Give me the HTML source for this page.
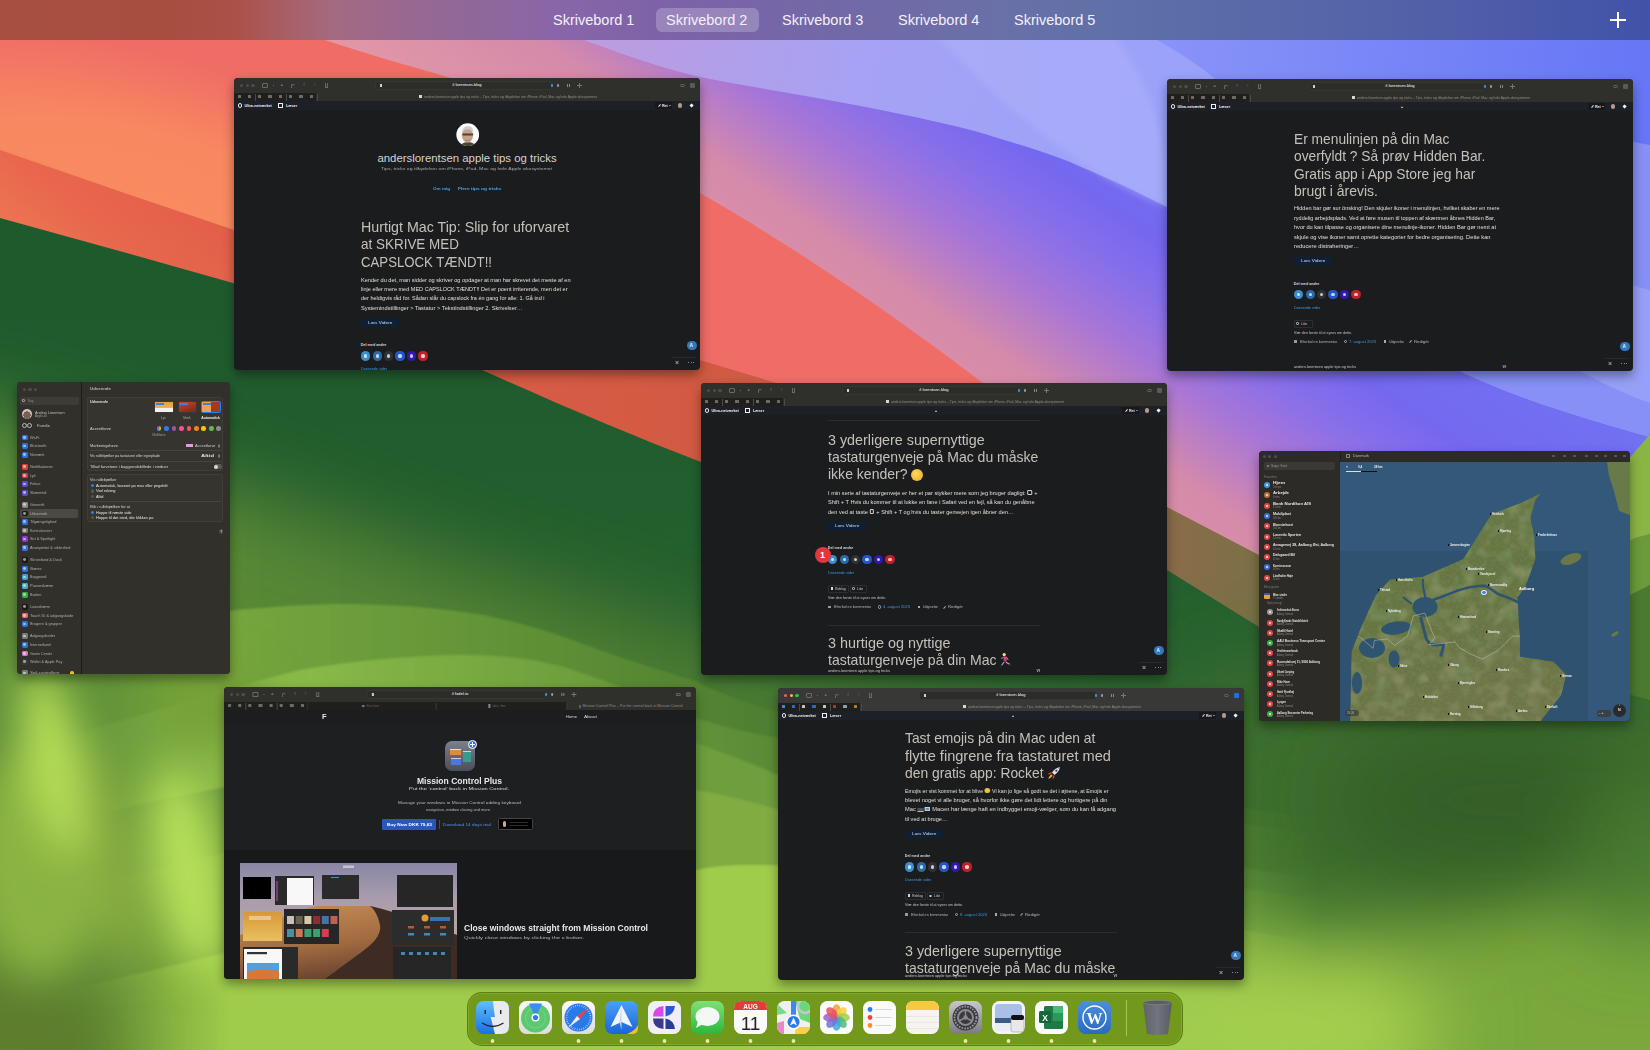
<!DOCTYPE html>
<html><head><meta charset="utf-8"><style>
*{box-sizing:border-box;margin:0;padding:0}
html,body{width:1650px;height:1050px;overflow:hidden;background:#000}
body{position:relative;font-family:"Liberation Sans",sans-serif}
.wp{position:absolute;left:0;top:0}
.topbar{position:absolute;left:0;top:0;width:1650px;height:40px;background:linear-gradient(90deg,#a85040 0px,#a84e40 167px,#ac5048 233px,#a86068 290px,#a46a80 333px,#9a6890 400px,#906898 467px,#8a66a8 550px,#7e62a8 650px,#7268a8 830px,#6a70a8 1000px,#6070a8 1100px,#5262a8 1400px,#4252a8 1650px)}
.pill{position:absolute;left:656px;top:8px;width:103px;height:24px;border-radius:6px;background:rgba(255,255,255,0.22)}
.tlabel{position:absolute;top:11px;font-size:14.5px;line-height:18px;color:#f4f0f8;white-space:nowrap}
.plus{position:absolute;left:1610px;top:12px;width:16px;height:16px}
.plus:before{content:"";position:absolute;left:7px;top:0;width:2px;height:16px;background:#fff}
.plus:after{content:"";position:absolute;left:0;top:7px;width:16px;height:2px;background:#fff}
.t{position:absolute;line-height:0;white-space:nowrap}
.r{position:absolute}
.win{position:absolute;background:#1b1c1e;border-radius:4px;overflow:hidden;box-shadow:0 5px 11px rgba(0,0,0,0.38)}
.dock{position:absolute;left:467px;top:992px;width:716px;height:54px;border-radius:15px;background:#72981c;border:1px solid rgba(70,100,20,0.5);box-shadow:inset 0 0 0 1px rgba(160,200,70,0.35)}
</style></head>
<body>

<svg class="wp" width="1650" height="1050" viewBox="0 0 1650 1050">
<defs>
  <linearGradient id="gCool" gradientUnits="userSpaceOnUse" x1="950" y1="470" x2="1230" y2="60">
    <stop offset="0" stop-color="#e298a6"/>
    <stop offset="0.25" stop-color="#d48aaa"/>
    <stop offset="0.4" stop-color="#a876d6"/>
    <stop offset="0.5" stop-color="#8c70e8"/>
    <stop offset="0.62" stop-color="#7468f0"/>
    <stop offset="1" stop-color="#7078f4"/>
  </linearGradient>
  <linearGradient id="fadeR" gradientUnits="userSpaceOnUse" x1="0" y1="0" x2="1650" y2="0">
    <stop offset="0.03" stop-color="#000"/><stop offset="0.14" stop-color="#fff"/><stop offset="0.70" stop-color="#fff"/><stop offset="0.80" stop-color="#000"/>
  </linearGradient>
  <linearGradient id="gH1" gradientUnits="userSpaceOnUse" x1="230" y1="0" x2="780" y2="0"><stop offset="0" stop-color="#76a63e"/><stop offset="1" stop-color="#4e7e30"/></linearGradient>
  <linearGradient id="gH2" gradientUnits="userSpaceOnUse" x1="300" y1="0" x2="780" y2="0"><stop offset="0" stop-color="#8aba48"/><stop offset="1" stop-color="#5a8a36"/></linearGradient>
  <linearGradient id="gMid" gradientUnits="userSpaceOnUse" x1="0" y1="0" x2="800" y2="0"><stop offset="0" stop-color="#5e8e38"/><stop offset="1" stop-color="#4a7a30"/></linearGradient>
  <linearGradient id="gBlueR" gradientUnits="userSpaceOnUse" x1="1150" y1="0" x2="1650" y2="60"><stop offset="0" stop-color="#8a94f8"/><stop offset="1" stop-color="#6676f6"/></linearGradient>
  <linearGradient id="gGlow" gradientUnits="userSpaceOnUse" x1="60" y1="300" x2="170" y2="160"><stop offset="0" stop-color="#f08456" stop-opacity="0.75"/><stop offset="0.45" stop-color="#f08456" stop-opacity="0.25"/><stop offset="1" stop-color="#f08456" stop-opacity="0"/></linearGradient>
  <mask id="mR" maskUnits="userSpaceOnUse" x="0" y="0" width="1650" height="1050"><rect width="1650" height="1050" fill="url(#fadeR)"/></mask>
  <linearGradient id="gLav" gradientUnits="userSpaceOnUse" x1="500" y1="40" x2="1200" y2="200">
    <stop offset="0" stop-color="#c49ad8"/>
    <stop offset="0.5" stop-color="#a6a2f4"/>
    <stop offset="1" stop-color="#98a2fa"/>
  </linearGradient>
  <radialGradient id="gCoral" gradientUnits="userSpaceOnUse" cx="0" cy="0" r="1" gradientTransform="translate(150 230) rotate(16.7) scale(420 175)">
    <stop offset="0" stop-color="#f98c60"/>
    <stop offset="0.55" stop-color="#f78860"/>
    <stop offset="1" stop-color="#f06c66"/>
  </radialGradient>
  <linearGradient id="gRed" gradientUnits="userSpaceOnUse" x1="0" y1="0" x2="1300" y2="0">
    <stop offset="0" stop-color="#e85e4c"/>
    <stop offset="0.55" stop-color="#d25a42"/>
    <stop offset="0.9" stop-color="#8a6c4a"/>
    <stop offset="0.97" stop-color="#7a7046"/>
    <stop offset="1" stop-color="#787046"/>
  </linearGradient>
  <linearGradient id="gGreen" gradientUnits="userSpaceOnUse" x1="0" y1="300" x2="0" y2="800">
    <stop offset="0" stop-color="#1f5a2d"/>
    <stop offset="1" stop-color="#2a6430"/>
  </linearGradient>
  <filter id="b4" filterUnits="userSpaceOnUse" x="-200" y="-200" width="2050" height="1450"><feGaussianBlur stdDeviation="3"/></filter>
  <filter id="b1" filterUnits="userSpaceOnUse" x="-200" y="-200" width="2050" height="1450"><feGaussianBlur stdDeviation="1.2"/></filter>
  <filter id="b20" filterUnits="userSpaceOnUse" x="-200" y="-200" width="2050" height="1450"><feGaussianBlur stdDeviation="20"/></filter>
  <filter id="b40" filterUnits="userSpaceOnUse" x="-200" y="-200" width="2050" height="1450"><feGaussianBlur stdDeviation="40"/></filter>
</defs>
<rect width="1650" height="1050" fill="url(#gCool)"/>
<!-- lavender top band (above L3) -->
<path d="M470 0 L1650 0 L1650 437 C1590 420 1520 400 1460 371 C1360 320 1260 250 1167 207 C1130 188 1100 175 1070 162 C1040 150 1010 142 985 134 C950 124 910 116 871 108 C810 96 750 87 700 77 C630 60 590 40 470 0 Z" fill="url(#gLav)"/>
<!-- light stripe -->
<path d="M900 0 L1080 0 C1150 60 1170 140 1167 207 C1060 170 960 60 900 0 Z" fill="#b0b2fa" opacity="0.5" filter="url(#b4)"/>
<!-- blue right of L5 -->
<path d="M1080 0 L1650 0 L1650 400 C1580 370 1450 270 1214 78 C1180 50 1140 30 1080 0 Z" fill="url(#gBlueR)"/>
<path d="M1300 79 L1650 145 L1650 437 C1590 420 1520 400 1460 371 C1420 330 1360 250 1300 79 Z" fill="#8690f6"/>
<path d="M1500 250 L1650 290 L1650 403 C1620 392 1600 382 1580 371 Z" fill="#96a0f8"/>
<!-- coral warm region -->
<path d="M193 0 C250 15 290 28 325 40 C370 55 410 66 451 78 C540 115 620 150 700 193 C800 250 900 320 983 383 C1050 430 1110 470 1167 507 L1300 600 L1300 1050 L0 1050 L0 0 Z" fill="url(#gCoral)"/>
<!-- red band -->
<path d="M0 150 C80 178 160 205 240 232 L700 360 L776 383 C900 420 1040 465 1167 507 L1259 555 L1400 620 L1400 1050 L0 1050 Z" fill="url(#gRed)"/>
<path d="M-20 140 C80 175 160 205 240 232 L560 330 L560 420 L-20 420 Z" fill="url(#gGlow)"/>
<!-- dark green -->
<path d="M0 218 C80 240 160 262 240 285 C320 310 400 340 482 370 C560 405 630 435 701 462 C850 510 1000 535 1167 570 L1259 627 C1350 640 1500 560 1633 467 L1650 434 L1650 1050 L0 1050 Z" fill="url(#gGreen)"/>
<!-- soft mid green lower-left -->
<g filter="url(#b40)">
  <path d="M-100 390 C0 415 100 445 230 490 C350 530 450 565 560 595 C700 640 900 700 1250 740 L1250 1150 L-100 1150 Z" fill="url(#gMid)"/>
  <path d="M1200 660 C1400 700 1550 690 1750 640 L1750 1150 L1200 1150 Z" fill="#3e6e2e"/>
  <path d="M1150 1150 C1250 1000 1400 900 1750 860 L1750 1150 Z" fill="#7aa83c"/>
</g>
<g filter="url(#b1)" mask="url(#mR)">
  <path d="M-20 660 C80 630 200 608 332 604 C420 604 480 612 521 624 C560 634 585 645 608 653 C640 664 670 673 695 681 C720 693 750 705 778 712 C900 745 1100 790 1400 830 L1400 1100 L-20 1100 Z" fill="url(#gH1)"/>
  <path d="M-20 760 C100 730 200 695 300 670 C360 660 410 656 457 655 C500 655 530 658 560 666 C580 672 600 679 617 686 C650 700 675 710 696 718 C720 726 750 733 778 738 C900 765 1100 800 1400 850 L1400 1100 L-20 1100 Z" fill="url(#gH2)"/>
  <path d="M-20 840 C150 800 350 760 550 730 C620 725 670 735 696 743 C730 755 755 765 778 775 C900 810 1100 850 1400 890 L1400 1100 L-20 1100 Z" fill="#6e9e3c"/>
  <path d="M-20 910 C120 880 300 830 550 785 C620 780 670 785 696 790 C730 796 755 803 778 809 C900 840 1100 870 1400 910 L1400 1100 L-20 1100 Z" fill="#80ac42"/>
  <path d="M-20 1010 C80 990 300 930 550 885 C620 875 670 872 696 870 C715 866 737 864 778 865.5 C900 870 1100 900 1400 960 L1400 1100 L-20 1100 Z" fill="#a0cc4c"/>
</g>
<g filter="url(#b40)">
  <ellipse cx="20" cy="1040" rx="110" ry="80" fill="#5a7a2c" opacity="0.9"/>
  <ellipse cx="1500" cy="800" rx="170" ry="80" fill="#355f27"/>
  <ellipse cx="1640" cy="860" rx="60" ry="80" fill="#4a7a30"/>
  <ellipse cx="1280" cy="1030" rx="160" ry="90" fill="#a8d450" opacity="0.9"/>
  <ellipse cx="1050" cy="1030" rx="200" ry="60" fill="#a0cc4c" opacity="0.9"/>
</g>
<g filter="url(#b20)">
  <ellipse cx="40" cy="860" rx="70" ry="120" fill="#8ab442"/>
  <ellipse cx="10" cy="1050" rx="70" ry="50" fill="#5e7e2e"/>
  <ellipse cx="210" cy="705" rx="55" ry="40" fill="#76a038"/>
  <ellipse cx="55" cy="760" rx="28" ry="95" fill="#b8e058" transform="rotate(-12 55 760)"/>
  <ellipse cx="112" cy="860" rx="22" ry="110" fill="#88ac40" transform="rotate(-12 112 860)"/>
  <ellipse cx="188" cy="870" rx="34" ry="105" fill="#b8e25a" transform="rotate(-10 188 870)"/>
</g>
<!-- light green hill at right edge -->
<path d="M1650 434 C1620 470 1560 540 1500 600 L1650 600 Z" fill="#8ab444"/>
<path d="M1650 534 C1620 540 1560 570 1500 620 L1650 640 Z" fill="#6a9a3a"/>
<path d="M1650 585 C1620 600 1560 630 1500 660 L1650 700 Z" fill="#4a7a30"/>
</svg><div class="topbar"></div>
<div class="pill"></div>
<div class="tlabel" style="left:553px">Skrivebord 1</div>
<div class="tlabel" style="left:666px">Skrivebord 2</div>
<div class="tlabel" style="left:782px">Skrivebord 3</div>
<div class="tlabel" style="left:898px">Skrivebord 4</div>
<div class="tlabel" style="left:1014px">Skrivebord 5</div>
<div class="plus"></div><div class="win" style="left:234px;top:78px;width:466px;height:292px;"><div class="r" style="left:0.00px;top:0.00px;width:466.00px;height:23.00px;background:#2f2f2b;"></div><div class="r" style="left:5.70px;top:5.80px;width:3.40px;height:3.40px;border-radius:50%;background:#4c4c48;"></div><div class="r" style="left:11.50px;top:5.80px;width:3.40px;height:3.40px;border-radius:50%;background:#4c4c48;"></div><div class="r" style="left:17.20px;top:5.80px;width:3.40px;height:3.40px;border-radius:50%;background:#4c4c48;"></div><div class="r" style="left:28.00px;top:5.00px;width:6.00px;height:5.00px;background:transparent;border:0.8px solid #6a6a66;border-radius:1px"></div><div class="r" style="left:38.50px;top:7.20px;width:1.50px;height:0.70px;background:#6a6a66;"></div><div class="t" style="left:45.50px;top:7.30px;font-size:4.5px;color:#6a6a66;font-weight:400;">&#9650;</div><div class="r" style="left:56.50px;top:5.50px;width:4.50px;height:4.00px;background:transparent;border-top:0.8px solid #6a6a66;border-left:0.8px solid #6a6a66;border-radius:3px 3px 0 0"></div><div class="t" style="left:69.00px;top:7.30px;font-size:6.5px;color:#6a6a66;font-weight:400;">&#8249;</div><div class="t" style="left:79.50px;top:7.30px;font-size:6.5px;color:#555;font-weight:400;">&#8250;</div><div class="r" style="left:90.50px;top:5.00px;width:3.00px;height:5.00px;background:transparent;border:0.8px solid #6a6a66;border-top:none"></div><div class="r" style="left:141.00px;top:3.20px;width:177.00px;height:8.60px;background:#2c2c29;border:0.6px solid #363632;border-radius:2px"></div><div class="r" style="left:146.00px;top:5.50px;width:2.20px;height:3.60px;background:#cfcfcf;"></div><div class="t" style="left:83.00px;top:7.40px;width:300px;text-align:center;font-size:3.8px;color:#d8d8d8;font-weight:700;"># lorentsen.blog</div><div class="r" style="left:316.50px;top:6.10px;width:2.60px;height:2.60px;border-radius:50%;background:#3d8cf5;"></div><div class="r" style="left:322.70px;top:6.10px;width:2.60px;height:2.60px;border-radius:50%;background:#9a9a96;"></div><div class="r" style="left:332.50px;top:6.00px;width:1.30px;height:2.80px;background:#888;"></div><div class="r" style="left:335.00px;top:6.00px;width:1.30px;height:2.80px;background:#888;"></div><div class="r" style="left:342.50px;top:7.00px;width:5.00px;height:0.70px;background:#777;"></div><div class="r" style="left:344.60px;top:4.90px;width:0.70px;height:5.00px;background:#777;"></div><div class="r" style="left:445.50px;top:5.50px;width:5.00px;height:3.50px;background:transparent;border:0.8px solid #666;border-radius:2px"></div><div class="r" style="left:456.00px;top:5.00px;width:4.50px;height:4.50px;background:#5a5a56;border-radius:1px"></div><div class="r" style="left:0.00px;top:15.00px;width:82.00px;height:8.00px;background:#1f1f1d;"></div><div class="r" style="left:3.50px;top:17.30px;width:3.20px;height:3.20px;background:#7a7a76;border-radius:0.6px;opacity:0.85"></div><div class="r" style="left:14.00px;top:17.30px;width:3.20px;height:3.20px;background:#7a7a76;border-radius:0.6px;opacity:0.85"></div><div class="r" style="left:24.00px;top:17.30px;width:3.20px;height:3.20px;background:#7a7a76;border-radius:0.6px;opacity:0.85"></div><div class="r" style="left:34.40px;top:17.30px;width:3.20px;height:3.20px;background:#7a7a76;border-radius:0.6px;opacity:0.85"></div><div class="r" style="left:44.70px;top:17.30px;width:3.20px;height:3.20px;background:#7a7a76;border-radius:0.6px;opacity:0.85"></div><div class="r" style="left:55.10px;top:17.30px;width:3.20px;height:3.20px;background:#7a7a76;border-radius:0.6px;opacity:0.85"></div><div class="r" style="left:65.40px;top:17.30px;width:3.20px;height:3.20px;background:#7a7a76;border-radius:0.6px;opacity:0.85"></div><div class="r" style="left:75.80px;top:17.30px;width:3.20px;height:3.20px;background:#7a7a76;border-radius:0.6px;opacity:0.85"></div><div class="r" style="left:20.70px;top:15.50px;width:0.60px;height:7.50px;background:#4a4a46;"></div><div class="r" style="left:51.60px;top:15.50px;width:0.60px;height:7.50px;background:#4a4a46;"></div><div class="r" style="left:82.70px;top:15.50px;width:0.60px;height:7.50px;background:#4a4a46;"></div><div class="r" style="left:184.50px;top:17.30px;width:3.20px;height:3.20px;background:#d8d8d0;"></div><div class="t" style="left:190.00px;top:19.00px;font-size:3.2px;color:#8e8e8a;font-weight:400;transform:scaleX(1.0777);transform-origin:0 0;">anders.lorentsen apple tips og tricks – Tips, tricks og tilbydelser om iPhone, iPad, Mac og hele Apple økosystemet</div><div class="r" style="left:0.00px;top:23.00px;width:466.00px;height:9.00px;background:#1d2026;"></div><div class="r" style="left:3.50px;top:25.20px;width:4.40px;height:4.40px;border-radius:50%;background:transparent;border:0.8px solid #e8e8e8"></div><div class="t" style="left:10.50px;top:27.60px;font-size:3.7px;color:#f0f0f0;font-weight:700;">Ultra-netværket</div><div class="r" style="left:43.60px;top:25.00px;width:5.20px;height:5.20px;background:#f0f0f0;"></div><div class="r" style="left:45.00px;top:26.30px;width:2.60px;height:2.60px;background:#1d2026;"></div><div class="t" style="left:52.00px;top:27.60px;font-size:3.7px;color:#f0f0f0;font-weight:700;">Læser</div><div class="r" style="left:421.00px;top:24.20px;width:17.00px;height:6.60px;background:#16181c;"></div><div class="r" style="left:423.80px;top:26.60px;width:3.00px;height:0.90px;background:#e8e8e8;transform:rotate(-45deg)"></div><div class="t" style="left:428.00px;top:27.60px;font-size:3.6px;color:#e8e8e8;font-weight:700;">Ret</div><div class="r" style="left:434.50px;top:27.00px;width:2.00px;height:1.20px;background:transparent;border-left:1px solid transparent;border-right:1px solid transparent;border-top:1.2px solid #e8e8e8;width:0;height:0"></div><div class="r" style="left:443.70px;top:25.20px;width:4.60px;height:4.60px;border-radius:50%;background:#b89a88;"></div><div class="r" style="left:455.80px;top:25.90px;width:3.20px;height:3.20px;background:#f0f0f0;transform:rotate(45deg);border-radius:0.5px"></div><svg class="r" style="left:221.5px;top:44.8px" width="23.5" height="23.5" viewBox="0 0 23.5 23.5"><defs><clipPath id="avc"><circle cx="11.75" cy="11.75" r="11.4"/></clipPath></defs><g clip-path="url(#avc)"><rect width="23.5" height="23.5" fill="#fbfbfb"/><path d="M4 23.5 C6 20 9 19 11.75 19 C15 19 18 20 20 23.5 Z" fill="#4a4530"/><ellipse cx="11.5" cy="12.5" rx="5.6" ry="7.2" fill="#c4a48c"/><path d="M5.8 10 C6 5 9 3.2 11.8 3.2 C15 3.2 17.6 5 17.6 10 C16 7 14 6.2 11.8 6.2 C9 6.2 7 7 5.8 10 Z" fill="#d0cecb"/><rect x="6.3" y="10.4" width="11" height="2" rx="0.8" fill="#3a3030" opacity="0.85"/><path d="M8.8 16.8 C10.5 17.8 12.5 17.8 14.2 16.8" stroke="#9a7a6a" stroke-width="0.8" fill="none"/></g></svg><div class="t" style="left:83.00px;top:80.25px;width:300px;text-align:center;font-size:11.4px;color:#d4d4d4;font-weight:400;">anderslorentsen apple tips og tricks</div><div class="t" style="left:147.00px;top:91.30px;font-size:3.6px;color:#a8a8a8;font-weight:400;transform:scaleX(1.4308);transform-origin:0 0;">Tips, tricks og tilbydelser om iPhone, iPad, Mac og hele Apple økosystemet</div><div class="t" style="left:199.00px;top:110.70px;font-size:3.9px;color:#4aa2e8;font-weight:700;transform:scaleX(1.1737);transform-origin:0 0;">Om mig</div><div class="t" style="left:223.50px;top:110.70px;font-size:3.9px;color:#4aa2e8;font-weight:700;transform:scaleX(1.2569);transform-origin:0 0;">Flere tips og tricks</div><div class="t" style="left:126.50px;top:149.01px;font-size:14.1px;color:#c4c1ba;font-weight:400;transform:scaleX(1.0102);transform-origin:0 0;">Hurtigt Mac Tip: Slip for uforvaret</div><div class="t" style="left:126.50px;top:166.01px;font-size:14.1px;color:#c4c1ba;font-weight:400;transform:scaleX(0.9551);transform-origin:0 0;">at SKRIVE MED</div><div class="t" style="left:126.50px;top:183.51px;font-size:14.1px;color:#c4c1ba;font-weight:400;transform:scaleX(0.9362);transform-origin:0 0;">CAPSLOCK TÆNDT!!</div><div class="t" style="left:126.50px;top:201.70px;font-size:5.5px;color:#e0ddd6;font-weight:400;transform:scaleX(1.0167);transform-origin:0 0;">Kender du det, man sidder og skriver og opdager at man har skrevet det meste af en</div><div class="t" style="left:126.50px;top:211.00px;font-size:5.5px;color:#e0ddd6;font-weight:400;transform:scaleX(1.0058);transform-origin:0 0;">linje eller mere med MED CAPSLOCK TÆNDT!! Det er poent irriterende, men det er</div><div class="t" style="left:126.50px;top:220.30px;font-size:5.5px;color:#e0ddd6;font-weight:400;transform:scaleX(1.0003);transform-origin:0 0;">der heldigvis råd for. Sådan slår du capslock fra én gang for alle: 1. Gå ind i</div><div class="t" style="left:126.50px;top:230.00px;font-size:5.5px;color:#e0ddd6;font-weight:400;transform:scaleX(1.0393);transform-origin:0 0;">Systemindstillinger &gt; Tastatur &gt; Tekstindstillinger 2. Skrivelser…</div><div class="r" style="left:126.80px;top:241.00px;width:38.00px;height:8.00px;background:#0e2036;border-radius:1px"></div><div class="t" style="left:133.60px;top:245.00px;font-size:4.2px;color:#d0dae8;font-weight:400;transform:scaleX(1.1432);transform-origin:0 0;">Læs Videre</div><div class="t" style="left:126.80px;top:266.90px;font-size:3.7px;color:#d8d8d8;font-weight:700;">Del med andre</div><div class="r" style="left:126.90px;top:273.40px;width:9.20px;height:9.20px;border-radius:50%;background:#3a8fd0;"></div><div class="r" style="left:129.90px;top:276.40px;width:3.20px;height:3.20px;border-radius:50%;background:rgba(255,255,255,0.75);"></div><div class="r" style="left:138.60px;top:273.40px;width:9.20px;height:9.20px;border-radius:50%;background:#2a6aa8;"></div><div class="r" style="left:141.60px;top:276.40px;width:3.20px;height:3.20px;border-radius:50%;background:rgba(255,255,255,0.75);"></div><div class="r" style="left:150.00px;top:273.40px;width:9.20px;height:9.20px;border-radius:50%;background:#303134;"></div><div class="r" style="left:153.00px;top:276.40px;width:3.20px;height:3.20px;border-radius:50%;background:rgba(255,255,255,0.75);"></div><div class="r" style="left:161.40px;top:273.40px;width:9.20px;height:9.20px;border-radius:50%;background:#2556c8;"></div><div class="r" style="left:164.40px;top:276.40px;width:3.20px;height:3.20px;border-radius:50%;background:rgba(255,255,255,0.75);"></div><div class="r" style="left:172.90px;top:273.40px;width:9.20px;height:9.20px;border-radius:50%;background:#3018b0;"></div><div class="r" style="left:175.90px;top:276.40px;width:3.20px;height:3.20px;border-radius:50%;background:rgba(255,255,255,0.75);"></div><div class="r" style="left:184.40px;top:273.40px;width:9.20px;height:9.20px;border-radius:50%;background:#c0202a;"></div><div class="r" style="left:187.40px;top:276.40px;width:3.20px;height:3.20px;border-radius:50%;background:rgba(255,255,255,0.75);"></div><div class="t" style="left:126.80px;top:290.80px;font-size:3.4px;color:#3a9ae0;font-weight:400;transform:scaleX(1.0947);transform-origin:0 0;">Dansende sider</div><div class="r" style="left:453.20px;top:262.70px;width:9.60px;height:9.60px;border-radius:50%;background:#3478b8;"></div><div class="t" style="left:455.40px;top:267.80px;font-size:4.6px;color:#eef;font-weight:700;">A</div><div class="r" style="left:438.00px;top:279.20px;width:24.00px;height:0.40px;background:#262a30;"></div><div class="r" style="left:440.50px;top:284.20px;width:4.20px;height:0.80px;background:#8a9098;transform:rotate(45deg)"></div><div class="r" style="left:440.50px;top:284.20px;width:4.20px;height:0.80px;background:#8a9098;transform:rotate(-45deg)"></div><div class="r" style="left:454.00px;top:283.70px;width:1.20px;height:1.20px;border-radius:50%;background:#a8aeb6;"></div><div class="r" style="left:456.50px;top:283.70px;width:1.20px;height:1.20px;border-radius:50%;background:#a8aeb6;"></div><div class="r" style="left:459.00px;top:283.70px;width:1.20px;height:1.20px;border-radius:50%;background:#a8aeb6;"></div></div><div class="win" style="left:1167px;top:79px;width:466px;height:292px;"><div class="r" style="left:0.00px;top:0.00px;width:466.00px;height:23.00px;background:#2f2f2b;"></div><div class="r" style="left:5.70px;top:5.80px;width:3.40px;height:3.40px;border-radius:50%;background:#4c4c48;"></div><div class="r" style="left:11.50px;top:5.80px;width:3.40px;height:3.40px;border-radius:50%;background:#4c4c48;"></div><div class="r" style="left:17.20px;top:5.80px;width:3.40px;height:3.40px;border-radius:50%;background:#4c4c48;"></div><div class="r" style="left:28.00px;top:5.00px;width:6.00px;height:5.00px;background:transparent;border:0.8px solid #6a6a66;border-radius:1px"></div><div class="r" style="left:38.50px;top:7.20px;width:1.50px;height:0.70px;background:#6a6a66;"></div><div class="t" style="left:45.50px;top:7.30px;font-size:4.5px;color:#6a6a66;font-weight:400;">&#9650;</div><div class="r" style="left:56.50px;top:5.50px;width:4.50px;height:4.00px;background:transparent;border-top:0.8px solid #6a6a66;border-left:0.8px solid #6a6a66;border-radius:3px 3px 0 0"></div><div class="t" style="left:69.00px;top:7.30px;font-size:6.5px;color:#6a6a66;font-weight:400;">&#8249;</div><div class="t" style="left:79.50px;top:7.30px;font-size:6.5px;color:#555;font-weight:400;">&#8250;</div><div class="r" style="left:90.50px;top:5.00px;width:3.00px;height:5.00px;background:transparent;border:0.8px solid #6a6a66;border-top:none"></div><div class="r" style="left:141.00px;top:3.20px;width:177.00px;height:8.60px;background:#2c2c29;border:0.6px solid #363632;border-radius:2px"></div><div class="r" style="left:146.00px;top:5.50px;width:2.20px;height:3.60px;background:#cfcfcf;"></div><div class="t" style="left:83.00px;top:7.40px;width:300px;text-align:center;font-size:3.8px;color:#d8d8d8;font-weight:700;"># lorentsen.blog</div><div class="r" style="left:316.50px;top:6.10px;width:2.60px;height:2.60px;border-radius:50%;background:#3d8cf5;"></div><div class="r" style="left:322.70px;top:6.10px;width:2.60px;height:2.60px;border-radius:50%;background:#9a9a96;"></div><div class="r" style="left:332.50px;top:6.00px;width:1.30px;height:2.80px;background:#888;"></div><div class="r" style="left:335.00px;top:6.00px;width:1.30px;height:2.80px;background:#888;"></div><div class="r" style="left:342.50px;top:7.00px;width:5.00px;height:0.70px;background:#777;"></div><div class="r" style="left:344.60px;top:4.90px;width:0.70px;height:5.00px;background:#777;"></div><div class="r" style="left:445.50px;top:5.50px;width:5.00px;height:3.50px;background:transparent;border:0.8px solid #666;border-radius:2px"></div><div class="r" style="left:456.00px;top:5.00px;width:4.50px;height:4.50px;background:#5a5a56;border-radius:1px"></div><div class="r" style="left:0.00px;top:15.00px;width:82.00px;height:8.00px;background:#1f1f1d;"></div><div class="r" style="left:3.50px;top:17.30px;width:3.20px;height:3.20px;background:#7a7a76;border-radius:0.6px;opacity:0.85"></div><div class="r" style="left:14.00px;top:17.30px;width:3.20px;height:3.20px;background:#7a7a76;border-radius:0.6px;opacity:0.85"></div><div class="r" style="left:24.00px;top:17.30px;width:3.20px;height:3.20px;background:#7a7a76;border-radius:0.6px;opacity:0.85"></div><div class="r" style="left:34.40px;top:17.30px;width:3.20px;height:3.20px;background:#7a7a76;border-radius:0.6px;opacity:0.85"></div><div class="r" style="left:44.70px;top:17.30px;width:3.20px;height:3.20px;background:#7a7a76;border-radius:0.6px;opacity:0.85"></div><div class="r" style="left:55.10px;top:17.30px;width:3.20px;height:3.20px;background:#7a7a76;border-radius:0.6px;opacity:0.85"></div><div class="r" style="left:65.40px;top:17.30px;width:3.20px;height:3.20px;background:#7a7a76;border-radius:0.6px;opacity:0.85"></div><div class="r" style="left:75.80px;top:17.30px;width:3.20px;height:3.20px;background:#7a7a76;border-radius:0.6px;opacity:0.85"></div><div class="r" style="left:20.70px;top:15.50px;width:0.60px;height:7.50px;background:#4a4a46;"></div><div class="r" style="left:51.60px;top:15.50px;width:0.60px;height:7.50px;background:#4a4a46;"></div><div class="r" style="left:82.70px;top:15.50px;width:0.60px;height:7.50px;background:#4a4a46;"></div><div class="r" style="left:184.50px;top:17.30px;width:3.20px;height:3.20px;background:#d8d8d0;"></div><div class="t" style="left:190.00px;top:19.00px;font-size:3.2px;color:#8e8e8a;font-weight:400;transform:scaleX(1.0777);transform-origin:0 0;">anders.lorentsen apple tips og tricks – Tips, tricks og tilbydelser om iPhone, iPad, Mac og hele Apple økosystemet</div><div class="r" style="left:0.00px;top:23.00px;width:466.00px;height:9.00px;background:#1d2026;"></div><div class="r" style="left:3.50px;top:25.20px;width:4.40px;height:4.40px;border-radius:50%;background:transparent;border:0.8px solid #e8e8e8"></div><div class="t" style="left:10.50px;top:27.60px;font-size:3.7px;color:#f0f0f0;font-weight:700;">Ultra-netværket</div><div class="r" style="left:43.60px;top:25.00px;width:5.20px;height:5.20px;background:#f0f0f0;"></div><div class="r" style="left:45.00px;top:26.30px;width:2.60px;height:2.60px;background:#1d2026;"></div><div class="t" style="left:52.00px;top:27.60px;font-size:3.7px;color:#f0f0f0;font-weight:700;">Læser</div><div class="r" style="left:421.00px;top:24.20px;width:17.00px;height:6.60px;background:#16181c;"></div><div class="r" style="left:423.80px;top:26.60px;width:3.00px;height:0.90px;background:#e8e8e8;transform:rotate(-45deg)"></div><div class="t" style="left:428.00px;top:27.60px;font-size:3.6px;color:#e8e8e8;font-weight:700;">Ret</div><div class="r" style="left:434.50px;top:27.00px;width:2.00px;height:1.20px;background:transparent;border-left:1px solid transparent;border-right:1px solid transparent;border-top:1.2px solid #e8e8e8;width:0;height:0"></div><div class="r" style="left:443.70px;top:25.20px;width:4.60px;height:4.60px;border-radius:50%;background:#b89a88;"></div><div class="r" style="left:455.80px;top:25.90px;width:3.20px;height:3.20px;background:#f0f0f0;transform:rotate(45deg);border-radius:0.5px"></div><div class="t" style="left:233.50px;top:27.50px;font-size:3px;color:#e8e8e8;font-weight:400;">&#9650;</div><div class="t" style="left:126.50px;top:59.51px;font-size:14.1px;color:#c4c1ba;font-weight:400;transform:scaleX(0.9772);transform-origin:0 0;">Er menulinjen på din Mac</div><div class="t" style="left:126.50px;top:77.01px;font-size:14.1px;color:#c4c1ba;font-weight:400;transform:scaleX(0.9763);transform-origin:0 0;">overfyldt ? Så prøv Hidden Bar.</div><div class="t" style="left:126.50px;top:94.51px;font-size:14.1px;color:#c4c1ba;font-weight:400;transform:scaleX(0.9805);transform-origin:0 0;">Gratis app i App Store jeg har</div><div class="t" style="left:126.50px;top:111.51px;font-size:14.1px;color:#c4c1ba;font-weight:400;transform:scaleX(0.9916);transform-origin:0 0;">brugt i årevis.</div><div class="t" style="left:126.50px;top:129.30px;font-size:5.5px;color:#e0ddd6;font-weight:400;transform:scaleX(1.0139);transform-origin:0 0;">Hidden bar gør sur önsking! Den skjuler ikoner i menulinjen, hvilket skaber en mere</div><div class="t" style="left:126.50px;top:138.70px;font-size:5.5px;color:#e0ddd6;font-weight:400;transform:scaleX(0.9991);transform-origin:0 0;">ryddelig arbejdsplads. Ved at føre musen til toppen af skærmen åbnes Hidden Bar,</div><div class="t" style="left:126.50px;top:148.00px;font-size:5.5px;color:#e0ddd6;font-weight:400;transform:scaleX(1.0212);transform-origin:0 0;">hvor du kan tilpasse og organisere dine menulinje-ikoner. Hidden Bar gør nemt at</div><div class="t" style="left:126.50px;top:157.60px;font-size:5.5px;color:#e0ddd6;font-weight:400;transform:scaleX(1.0367);transform-origin:0 0;">skjule og vise ikoner samt oprette kategorier for bedre organisering. Dette kan</div><div class="t" style="left:126.50px;top:166.90px;font-size:5.5px;color:#e0ddd6;font-weight:400;transform:scaleX(1.0421);transform-origin:0 0;">reducere distraheringer…</div><div class="r" style="left:126.80px;top:178.00px;width:38.00px;height:8.00px;background:#0e2036;border-radius:1px"></div><div class="t" style="left:133.60px;top:182.00px;font-size:4.2px;color:#d0dae8;font-weight:400;transform:scaleX(1.1432);transform-origin:0 0;">Læs Videre</div><div class="t" style="left:126.80px;top:204.70px;font-size:3.7px;color:#d8d8d8;font-weight:700;">Del med andre</div><div class="r" style="left:126.90px;top:210.80px;width:9.20px;height:9.20px;border-radius:50%;background:#3a8fd0;"></div><div class="r" style="left:129.90px;top:213.80px;width:3.20px;height:3.20px;border-radius:50%;background:rgba(255,255,255,0.75);"></div><div class="r" style="left:138.60px;top:210.80px;width:9.20px;height:9.20px;border-radius:50%;background:#2a6aa8;"></div><div class="r" style="left:141.60px;top:213.80px;width:3.20px;height:3.20px;border-radius:50%;background:rgba(255,255,255,0.75);"></div><div class="r" style="left:150.00px;top:210.80px;width:9.20px;height:9.20px;border-radius:50%;background:#303134;"></div><div class="r" style="left:153.00px;top:213.80px;width:3.20px;height:3.20px;border-radius:50%;background:rgba(255,255,255,0.75);"></div><div class="r" style="left:161.40px;top:210.80px;width:9.20px;height:9.20px;border-radius:50%;background:#2556c8;"></div><div class="r" style="left:164.40px;top:213.80px;width:3.20px;height:3.20px;border-radius:50%;background:rgba(255,255,255,0.75);"></div><div class="r" style="left:172.90px;top:210.80px;width:9.20px;height:9.20px;border-radius:50%;background:#3018b0;"></div><div class="r" style="left:175.90px;top:213.80px;width:3.20px;height:3.20px;border-radius:50%;background:rgba(255,255,255,0.75);"></div><div class="r" style="left:184.40px;top:210.80px;width:9.20px;height:9.20px;border-radius:50%;background:#c0202a;"></div><div class="r" style="left:187.40px;top:213.80px;width:3.20px;height:3.20px;border-radius:50%;background:rgba(255,255,255,0.75);"></div><div class="t" style="left:126.80px;top:228.60px;font-size:3.4px;color:#3a9ae0;font-weight:400;transform:scaleX(1.0947);transform-origin:0 0;">Dansende sider</div><div class="r" style="left:127.00px;top:240.60px;width:19.00px;height:8.00px;background:transparent;border:0.5px solid #2c2e32;border-radius:1px"></div><div class="r" style="left:129.40px;top:243.40px;width:2.40px;height:2.40px;border-radius:50%;background:transparent;border:0.5px solid #c8c8c8"></div><div class="t" style="left:134.00px;top:244.60px;font-size:3.4px;color:#c8c8c8;font-weight:400;">Like</div><div class="t" style="left:126.80px;top:253.60px;font-size:3.4px;color:#c0c0c0;font-weight:400;transform:scaleX(1.0612);transform-origin:0 0;">Vær den første til at synes om dette.</div><div class="r" style="left:127.00px;top:261.20px;width:3.00px;height:2.60px;background:#9a9a9a;"></div><div class="t" style="left:133.00px;top:262.70px;font-size:3.5px;color:#b8b8b8;font-weight:400;transform:scaleX(1.0450);transform-origin:0 0;">Efterlad en kommentar</div><div class="r" style="left:176.90px;top:261.10px;width:3.20px;height:3.20px;border-radius:50%;background:transparent;border:0.6px solid #aaa"></div><div class="t" style="left:182.00px;top:262.70px;font-size:3.5px;color:#3a9ae0;font-weight:400;transform:scaleX(1.1652);transform-origin:0 0;">7. august 2023</div><div class="r" style="left:216.50px;top:261.30px;width:2.80px;height:2.60px;background:transparent;border:0.6px solid #aaa"></div><div class="t" style="left:222.00px;top:262.70px;font-size:3.5px;color:#b8b8b8;font-weight:400;transform:scaleX(0.9756);transform-origin:0 0;">Udgivelse</div><div class="r" style="left:242.00px;top:262.30px;width:3.00px;height:0.80px;background:#aaa;transform:rotate(-45deg)"></div><div class="t" style="left:247.00px;top:262.70px;font-size:3.5px;color:#b8b8b8;font-weight:400;transform:scaleX(1.2229);transform-origin:0 0;">Redigér</div><div class="t" style="left:126.80px;top:288.20px;font-size:3.4px;color:#c8c8c8;font-weight:400;transform:scaleX(1.1422);transform-origin:0 0;">anders.lorentsen apple tips og tricks</div><div class="t" style="left:335.50px;top:288.20px;font-size:3.4px;color:#c8c8c8;font-weight:700;">Vf</div><div class="r" style="left:453.20px;top:262.70px;width:9.60px;height:9.60px;border-radius:50%;background:#3478b8;"></div><div class="t" style="left:455.40px;top:267.80px;font-size:4.6px;color:#eef;font-weight:700;">A</div><div class="r" style="left:438.00px;top:279.20px;width:24.00px;height:0.40px;background:#262a30;"></div><div class="r" style="left:440.50px;top:284.20px;width:4.20px;height:0.80px;background:#8a9098;transform:rotate(45deg)"></div><div class="r" style="left:440.50px;top:284.20px;width:4.20px;height:0.80px;background:#8a9098;transform:rotate(-45deg)"></div><div class="r" style="left:454.00px;top:283.70px;width:1.20px;height:1.20px;border-radius:50%;background:#a8aeb6;"></div><div class="r" style="left:456.50px;top:283.70px;width:1.20px;height:1.20px;border-radius:50%;background:#a8aeb6;"></div><div class="r" style="left:459.00px;top:283.70px;width:1.20px;height:1.20px;border-radius:50%;background:#a8aeb6;"></div></div><div class="win" style="left:17px;top:382px;width:213px;height:292px;background:#31302b"><div class="r" style="left:0.00px;top:0.00px;width:213.00px;height:292.00px;background:#31302b;"></div><div class="r" style="left:64.00px;top:0.00px;width:0.90px;height:292.00px;background:#1b1b19;"></div><div class="r" style="left:5.80px;top:5.80px;width:3.20px;height:3.20px;border-radius:50%;background:#4e4d48;"></div><div class="r" style="left:11.40px;top:5.80px;width:3.20px;height:3.20px;border-radius:50%;background:#4e4d48;"></div><div class="r" style="left:17.00px;top:5.80px;width:3.20px;height:3.20px;border-radius:50%;background:#4e4d48;"></div><div class="t" style="left:73.00px;top:7.40px;font-size:4.2px;color:#b8b8b2;font-weight:700;transform:scaleX(1.0492);transform-origin:0 0;">Udseende</div><div class="r" style="left:3.00px;top:15.00px;width:59.00px;height:7.50px;background:#3d3c37;border-radius:2px"></div><div class="r" style="left:5.00px;top:17.40px;width:2.60px;height:2.60px;border-radius:50%;background:transparent;border:0.6px solid #bbb"></div><div class="t" style="left:10.50px;top:18.80px;font-size:4px;color:#8a8a85;font-weight:400;transform:scaleX(0.7489);transform-origin:0 0;">Søg</div><div class="r" style="left:5.00px;top:27.00px;width:10.00px;height:10.00px;border-radius:50%;background:radial-gradient(circle at 50% 60%,#7a6050 0 45%,#c8c4c0 48% 100%);"></div><div class="t" style="left:17.50px;top:30.60px;font-size:3.6px;color:#c0c0ba;font-weight:400;transform:scaleX(1.0396);transform-origin:0 0;">Anders Lorentsen</div><div class="t" style="left:17.50px;top:34.40px;font-size:3.4px;color:#a0a09a;font-weight:400;transform:scaleX(0.9089);transform-origin:0 0;">Apple-ID</div><div class="r" style="left:4.90px;top:41.00px;width:5.20px;height:5.20px;border-radius:50%;background:transparent;border:0.7px solid #bbb"></div><div class="r" style="left:10.20px;top:41.00px;width:5.20px;height:5.20px;border-radius:50%;background:transparent;border:0.7px solid #bbb"></div><div class="t" style="left:20.00px;top:43.60px;font-size:4px;color:#c0c0ba;font-weight:400;transform:scaleX(1.0085);transform-origin:0 0;">Familie</div><div class="r" style="left:4.90px;top:52.60px;width:5.90px;height:5.90px;background:#2f6fd8;border-radius:1.4px"></div><div class="r" style="left:6.40px;top:54.10px;width:2.90px;height:2.90px;background:rgba(255,255,255,0.55);border-radius:50%"></div><div class="t" style="left:12.60px;top:55.50px;font-size:4px;color:#aeaea8;font-weight:400;transform:scaleX(1.0077);transform-origin:0 0;">Wi-Fi</div><div class="r" style="left:4.90px;top:61.10px;width:5.90px;height:5.90px;background:#2f6fd8;border-radius:1.4px"></div><div class="r" style="left:6.40px;top:62.60px;width:2.90px;height:2.90px;background:rgba(255,255,255,0.55);border-radius:50%"></div><div class="t" style="left:12.60px;top:64.00px;font-size:4px;color:#aeaea8;font-weight:400;transform:scaleX(0.9701);transform-origin:0 0;">Bluetooth</div><div class="r" style="left:4.90px;top:69.70px;width:5.90px;height:5.90px;background:#2f6fd8;border-radius:1.4px"></div><div class="r" style="left:6.40px;top:71.20px;width:2.90px;height:2.90px;background:rgba(255,255,255,0.55);border-radius:50%"></div><div class="t" style="left:12.60px;top:72.60px;font-size:4px;color:#aeaea8;font-weight:400;transform:scaleX(0.9521);transform-origin:0 0;">Netværk</div><div class="r" style="left:4.90px;top:81.70px;width:5.90px;height:5.90px;background:#d8403a;border-radius:1.4px"></div><div class="r" style="left:6.40px;top:83.20px;width:2.90px;height:2.90px;background:rgba(255,255,255,0.55);border-radius:50%"></div><div class="t" style="left:12.60px;top:84.60px;font-size:4px;color:#aeaea8;font-weight:400;transform:scaleX(0.9810);transform-origin:0 0;">Notifikationer</div><div class="r" style="left:4.90px;top:90.60px;width:5.90px;height:5.90px;background:#d83a50;border-radius:1.4px"></div><div class="r" style="left:6.40px;top:92.10px;width:2.90px;height:2.90px;background:rgba(255,255,255,0.55);border-radius:50%"></div><div class="t" style="left:12.60px;top:93.50px;font-size:4px;color:#aeaea8;font-weight:400;transform:scaleX(0.8554);transform-origin:0 0;">Lyd</div><div class="r" style="left:4.90px;top:99.10px;width:5.90px;height:5.90px;background:#5a4ac8;border-radius:1.4px"></div><div class="r" style="left:6.40px;top:100.60px;width:2.90px;height:2.90px;background:rgba(255,255,255,0.55);border-radius:50%"></div><div class="t" style="left:12.60px;top:102.00px;font-size:4px;color:#aeaea8;font-weight:400;transform:scaleX(0.9536);transform-origin:0 0;">Fokus</div><div class="r" style="left:4.90px;top:107.70px;width:5.90px;height:5.90px;background:#5a4ac8;border-radius:1.4px"></div><div class="r" style="left:6.40px;top:109.20px;width:2.90px;height:2.90px;background:rgba(255,255,255,0.55);border-radius:50%"></div><div class="t" style="left:12.60px;top:110.60px;font-size:4px;color:#aeaea8;font-weight:400;transform:scaleX(0.9577);transform-origin:0 0;">Skærmtid</div><div class="r" style="left:4.90px;top:119.70px;width:5.90px;height:5.90px;background:#8a8a86;border-radius:1.4px"></div><div class="r" style="left:6.40px;top:121.20px;width:2.90px;height:2.90px;background:rgba(255,255,255,0.55);border-radius:50%"></div><div class="t" style="left:12.60px;top:122.60px;font-size:4px;color:#aeaea8;font-weight:400;transform:scaleX(0.9385);transform-origin:0 0;">Generelt</div><div class="r" style="left:3.00px;top:127.00px;width:58.00px;height:9.00px;background:#4a4943;border-radius:2px"></div><div class="r" style="left:4.90px;top:128.60px;width:5.90px;height:5.90px;background:#1a1a1a;border-radius:1.4px"></div><div class="r" style="left:6.40px;top:130.10px;width:2.90px;height:2.90px;background:rgba(255,255,255,0.55);border-radius:50%"></div><div class="t" style="left:12.60px;top:131.50px;font-size:4px;color:#aeaea8;font-weight:400;transform:scaleX(0.9534);transform-origin:0 0;">Udseende</div><div class="r" style="left:4.90px;top:136.80px;width:5.90px;height:5.90px;background:#2f6fd8;border-radius:1.4px"></div><div class="r" style="left:6.40px;top:138.30px;width:2.90px;height:2.90px;background:rgba(255,255,255,0.55);border-radius:50%"></div><div class="t" style="left:12.60px;top:139.70px;font-size:4px;color:#aeaea8;font-weight:400;transform:scaleX(0.9705);transform-origin:0 0;">Tilgængelighed</div><div class="r" style="left:4.90px;top:145.60px;width:5.90px;height:5.90px;background:#7a7a76;border-radius:1.4px"></div><div class="r" style="left:6.40px;top:147.10px;width:2.90px;height:2.90px;background:rgba(255,255,255,0.55);border-radius:50%"></div><div class="t" style="left:12.60px;top:148.50px;font-size:4px;color:#aeaea8;font-weight:400;transform:scaleX(0.9203);transform-origin:0 0;">Kontrolcenter</div><div class="r" style="left:4.90px;top:154.10px;width:5.90px;height:5.90px;background:#8a3ac8;border-radius:1.4px"></div><div class="r" style="left:6.40px;top:155.60px;width:2.90px;height:2.90px;background:rgba(255,255,255,0.55);border-radius:50%"></div><div class="t" style="left:12.60px;top:157.00px;font-size:4px;color:#aeaea8;font-weight:400;transform:scaleX(0.9682);transform-origin:0 0;">Siri &amp; Spotlight</div><div class="r" style="left:4.90px;top:162.70px;width:5.90px;height:5.90px;background:#3a70d8;border-radius:1.4px"></div><div class="r" style="left:6.40px;top:164.20px;width:2.90px;height:2.90px;background:rgba(255,255,255,0.55);border-radius:50%"></div><div class="t" style="left:12.60px;top:165.60px;font-size:4px;color:#aeaea8;font-weight:400;transform:scaleX(0.9612);transform-origin:0 0;">Anonymitet &amp; sikkerhed</div><div class="r" style="left:4.90px;top:174.80px;width:5.90px;height:5.90px;background:#1a1a1a;border-radius:1.4px"></div><div class="r" style="left:6.40px;top:176.30px;width:2.90px;height:2.90px;background:rgba(255,255,255,0.55);border-radius:50%"></div><div class="t" style="left:12.60px;top:177.70px;font-size:4px;color:#aeaea8;font-weight:400;transform:scaleX(0.9660);transform-origin:0 0;">Skrivebord &amp; Dock</div><div class="r" style="left:4.90px;top:183.70px;width:5.90px;height:5.90px;background:#2f6fd8;border-radius:1.4px"></div><div class="r" style="left:6.40px;top:185.20px;width:2.90px;height:2.90px;background:rgba(255,255,255,0.55);border-radius:50%"></div><div class="t" style="left:12.60px;top:186.60px;font-size:4px;color:#aeaea8;font-weight:400;transform:scaleX(0.7537);transform-origin:0 0;">Skærme</div><div class="r" style="left:4.90px;top:192.10px;width:5.90px;height:5.90px;background:#3aa0d8;border-radius:1.4px"></div><div class="r" style="left:6.40px;top:193.60px;width:2.90px;height:2.90px;background:rgba(255,255,255,0.55);border-radius:50%"></div><div class="t" style="left:12.60px;top:195.00px;font-size:4px;color:#aeaea8;font-weight:400;transform:scaleX(0.9447);transform-origin:0 0;">Baggrund</div><div class="r" style="left:4.90px;top:200.70px;width:5.90px;height:5.90px;background:#4aa8c8;border-radius:1.4px"></div><div class="r" style="left:6.40px;top:202.20px;width:2.90px;height:2.90px;background:rgba(255,255,255,0.55);border-radius:50%"></div><div class="t" style="left:12.60px;top:203.60px;font-size:4px;color:#aeaea8;font-weight:400;transform:scaleX(0.9931);transform-origin:0 0;">Pauseskærm</div><div class="r" style="left:4.90px;top:209.70px;width:5.90px;height:5.90px;background:#3aaa48;border-radius:1.4px"></div><div class="r" style="left:6.40px;top:211.20px;width:2.90px;height:2.90px;background:rgba(255,255,255,0.55);border-radius:50%"></div><div class="t" style="left:12.60px;top:212.60px;font-size:4px;color:#aeaea8;font-weight:400;transform:scaleX(0.9859);transform-origin:0 0;">Batteri</div><div class="r" style="left:4.90px;top:221.80px;width:5.90px;height:5.90px;background:#1a1a1a;border-radius:1.4px"></div><div class="r" style="left:6.40px;top:223.30px;width:2.90px;height:2.90px;background:rgba(255,255,255,0.55);border-radius:50%"></div><div class="t" style="left:12.60px;top:224.70px;font-size:4px;color:#aeaea8;font-weight:400;transform:scaleX(0.9567);transform-origin:0 0;">Låseskærm</div><div class="r" style="left:4.90px;top:230.60px;width:5.90px;height:5.90px;background:#d86a7a;border-radius:1.4px"></div><div class="r" style="left:6.40px;top:232.10px;width:2.90px;height:2.90px;background:rgba(255,255,255,0.55);border-radius:50%"></div><div class="t" style="left:12.60px;top:233.50px;font-size:4px;color:#aeaea8;font-weight:400;transform:scaleX(0.9708);transform-origin:0 0;">Touch ID &amp; adgangskode</div><div class="r" style="left:4.90px;top:239.10px;width:5.90px;height:5.90px;background:#2f6fd8;border-radius:1.4px"></div><div class="r" style="left:6.40px;top:240.60px;width:2.90px;height:2.90px;background:rgba(255,255,255,0.55);border-radius:50%"></div><div class="t" style="left:12.60px;top:242.00px;font-size:4px;color:#aeaea8;font-weight:400;transform:scaleX(0.9720);transform-origin:0 0;">Brugere &amp; grupper</div><div class="r" style="left:4.90px;top:251.10px;width:5.90px;height:5.90px;background:#7a7a76;border-radius:1.4px"></div><div class="r" style="left:6.40px;top:252.60px;width:2.90px;height:2.90px;background:rgba(255,255,255,0.55);border-radius:50%"></div><div class="t" style="left:12.60px;top:254.00px;font-size:4px;color:#aeaea8;font-weight:400;transform:scaleX(0.9730);transform-origin:0 0;">Adgangskoder</div><div class="r" style="left:4.90px;top:259.80px;width:5.90px;height:5.90px;background:#2f6fd8;border-radius:1.4px"></div><div class="r" style="left:6.40px;top:261.30px;width:2.90px;height:2.90px;background:rgba(255,255,255,0.55);border-radius:50%"></div><div class="t" style="left:12.60px;top:262.70px;font-size:4px;color:#aeaea8;font-weight:400;transform:scaleX(0.9539);transform-origin:0 0;">Internetkonti</div><div class="r" style="left:4.90px;top:268.60px;width:5.90px;height:5.90px;background:#c87ab8;border-radius:1.4px"></div><div class="r" style="left:6.40px;top:270.10px;width:2.90px;height:2.90px;background:rgba(255,255,255,0.55);border-radius:50%"></div><div class="t" style="left:12.60px;top:271.50px;font-size:4px;color:#aeaea8;font-weight:400;transform:scaleX(0.9202);transform-origin:0 0;">Game Center</div><div class="r" style="left:4.90px;top:276.80px;width:5.90px;height:5.90px;background:#3a3a3a;border-radius:1.4px"></div><div class="r" style="left:6.40px;top:278.30px;width:2.90px;height:2.90px;background:rgba(255,255,255,0.55);border-radius:50%"></div><div class="t" style="left:12.60px;top:279.70px;font-size:4px;color:#aeaea8;font-weight:400;transform:scaleX(0.9565);transform-origin:0 0;">Wallet &amp; Apple Pay</div><div class="r" style="left:4.90px;top:288.10px;width:5.90px;height:5.90px;background:#7a7a76;border-radius:1.4px"></div><div class="r" style="left:6.40px;top:289.60px;width:2.90px;height:2.90px;background:rgba(255,255,255,0.55);border-radius:50%"></div><div class="t" style="left:12.60px;top:291.00px;font-size:4px;color:#aeaea8;font-weight:400;transform:scaleX(1.1016);transform-origin:0 0;">Spil-controllere</div><div class="r" style="left:53.20px;top:289.20px;width:3.60px;height:3.60px;border-radius:50%;background:#f0c020;"></div><div class="r" style="left:70.00px;top:15.00px;width:136.00px;height:74.00px;background:#35342f;border:0.5px solid #3f3e38;border-radius:2px"></div><div class="t" style="left:73.00px;top:20.30px;font-size:3.8px;color:#e0e0da;font-weight:700;transform:scaleX(0.9914);transform-origin:0 0;">Udseende</div><div class="r" style="left:137.00px;top:19.00px;width:19.50px;height:12.00px;background:linear-gradient(180deg,#e8a040,#f0b060 60%,#f8f0e8 60%);border:0.8px solid #3a3a36;border-radius:1.5px"></div><div class="r" style="left:139.00px;top:20.50px;width:8.00px;height:2.00px;background:#3a80e8;"></div><div class="r" style="left:160.50px;top:19.00px;width:19.50px;height:12.00px;background:linear-gradient(160deg,#c84a20,#702a18);border:0.8px solid #3a3a36;border-radius:1.5px"></div><div class="r" style="left:162.50px;top:20.50px;width:8.00px;height:2.00px;background:#3a80e8;"></div><div class="r" style="left:184.00px;top:19.00px;width:19.50px;height:12.00px;background:linear-gradient(90deg,#f0a050 50%,#a03a20 50%);border:0.8px solid #2a7ef0;border-radius:1.5px"></div><div class="r" style="left:186.00px;top:20.50px;width:8.00px;height:2.00px;background:#3a80e8;"></div><div class="t" style="left:-3.50px;top:36.00px;width:300px;text-align:center;font-size:3.2px;color:#a8a8a2;font-weight:400;">Lys</div><div class="t" style="left:20.00px;top:36.00px;width:300px;text-align:center;font-size:3.2px;color:#a8a8a2;font-weight:400;">Mørk</div><div class="t" style="left:43.60px;top:36.00px;width:300px;text-align:center;font-size:3.4px;color:#f0f0ea;font-weight:700;">Automatisk</div><div class="t" style="left:73.00px;top:46.50px;font-size:3.8px;color:#d8d8d2;font-weight:400;transform:scaleX(1.0467);transform-origin:0 0;">Accentfarve</div><div class="r" style="left:139.70px;top:44.20px;width:4.60px;height:4.60px;border-radius:50%;background:conic-gradient(#f44,#fb0,#4c4,#39f,#a4f,#f44);"></div><div class="r" style="left:147.16px;top:44.20px;width:4.60px;height:4.60px;border-radius:50%;background:#3478f6;"></div><div class="r" style="left:154.62px;top:44.20px;width:4.60px;height:4.60px;border-radius:50%;background:#a550a7;"></div><div class="r" style="left:162.08px;top:44.20px;width:4.60px;height:4.60px;border-radius:50%;background:#f74f9e;"></div><div class="r" style="left:169.54px;top:44.20px;width:4.60px;height:4.60px;border-radius:50%;background:#ff5257;"></div><div class="r" style="left:177.00px;top:44.20px;width:4.60px;height:4.60px;border-radius:50%;background:#f7821b;"></div><div class="r" style="left:184.46px;top:44.20px;width:4.60px;height:4.60px;border-radius:50%;background:#ffc600;"></div><div class="r" style="left:191.92px;top:44.20px;width:4.60px;height:4.60px;border-radius:50%;background:#62ba46;"></div><div class="r" style="left:199.38px;top:44.20px;width:4.60px;height:4.60px;border-radius:50%;background:#8c8c8c;"></div><div class="t" style="left:-8.00px;top:53.00px;width:300px;text-align:center;font-size:3px;color:#a0a09a;font-weight:400;">Multifarve</div><div class="t" style="left:73.00px;top:63.50px;font-size:3.8px;color:#d8d8d2;font-weight:400;transform:scaleX(1.0281);transform-origin:0 0;">Markeringsfarve</div><div class="r" style="left:169.00px;top:62.00px;width:7.00px;height:3.20px;background:linear-gradient(90deg,#c8a0f0,#f0a0c0);"></div><div class="t" style="left:177.50px;top:63.50px;font-size:3.6px;color:#d0d0ca;font-weight:400;transform:scaleX(1.0798);transform-origin:0 0;">Accentfarve</div><div class="r" style="left:200.50px;top:61.50px;width:2.60px;height:4.20px;background:transparent;border:0.5px solid #777;border-radius:1px"></div><div class="r" style="left:73.00px;top:68.00px;width:131.00px;height:0.40px;background:#46453f;"></div><div class="t" style="left:73.00px;top:73.60px;font-size:3.8px;color:#d8d8d2;font-weight:400;transform:scaleX(0.9351);transform-origin:0 0;">Vis rullebjælker på tastaturet eller styreplade</div><div class="t" style="left:184.00px;top:73.60px;font-size:3.6px;color:#e0e0da;font-weight:700;transform:scaleX(1.6282);transform-origin:0 0;">Altid</div><div class="r" style="left:200.50px;top:71.50px;width:2.60px;height:4.20px;background:transparent;border:0.5px solid #777;border-radius:1px"></div><div class="r" style="left:73.00px;top:78.60px;width:131.00px;height:0.40px;background:#46453f;"></div><div class="t" style="left:73.00px;top:84.50px;font-size:3.8px;color:#d8d8d2;font-weight:400;transform:scaleX(1.0669);transform-origin:0 0;">Tillad farvetone i baggrundsbillede i vinduer</div><div class="r" style="left:196.50px;top:82.20px;width:8.00px;height:4.80px;background:#5a5954;border-radius:3px"></div><div class="r" style="left:197.00px;top:82.60px;width:4.00px;height:4.00px;border-radius:50%;background:#d8d8d2;"></div><div class="r" style="left:70.00px;top:92.00px;width:136.00px;height:48.00px;background:#35342f;border:0.5px solid #3f3e38;border-radius:2px"></div><div class="t" style="left:73.00px;top:97.50px;font-size:3.8px;color:#d8d8d2;font-weight:400;transform:scaleX(1.0235);transform-origin:0 0;">Vis rullebjælker</div><div class="r" style="left:73.60px;top:101.90px;width:3.20px;height:3.20px;border-radius:50%;background:#2a7ef0;"></div><div class="t" style="left:78.50px;top:103.50px;font-size:3.7px;color:#e8e8e2;font-weight:400;transform:scaleX(1.0536);transform-origin:0 0;">Automatisk, baseret på mus eller pegefelt</div><div class="r" style="left:73.60px;top:107.40px;width:3.20px;height:3.20px;border-radius:50%;background:#555450;"></div><div class="t" style="left:78.50px;top:109.00px;font-size:3.7px;color:#e8e8e2;font-weight:400;transform:scaleX(1.0567);transform-origin:0 0;">Ved rulning</div><div class="r" style="left:73.60px;top:112.90px;width:3.20px;height:3.20px;border-radius:50%;background:#555450;"></div><div class="t" style="left:78.50px;top:114.50px;font-size:3.7px;color:#e8e8e2;font-weight:400;transform:scaleX(1.0435);transform-origin:0 0;">Altid</div><div class="r" style="left:73.00px;top:119.00px;width:131.00px;height:0.40px;background:#46453f;"></div><div class="t" style="left:73.00px;top:124.50px;font-size:3.8px;color:#d8d8d2;font-weight:400;transform:scaleX(1.0191);transform-origin:0 0;">Klik i rullebjælken for at</div><div class="r" style="left:73.60px;top:128.90px;width:3.20px;height:3.20px;border-radius:50%;background:#2a7ef0;"></div><div class="t" style="left:78.50px;top:130.50px;font-size:3.7px;color:#e8e8e2;font-weight:400;transform:scaleX(1.0558);transform-origin:0 0;">Hoppe til næste side</div><div class="r" style="left:73.60px;top:133.90px;width:3.20px;height:3.20px;border-radius:50%;background:#555450;"></div><div class="t" style="left:78.50px;top:135.50px;font-size:3.7px;color:#e8e8e2;font-weight:400;transform:scaleX(1.0789);transform-origin:0 0;">Hoppe til det sted, der klikkes på</div><div class="r" style="left:202.30px;top:147.40px;width:4.20px;height:4.20px;border-radius:50%;background:#4a4944;"></div><div class="t" style="left:203.40px;top:149.60px;font-size:3px;color:#ccc;font-weight:700;">?</div></div><div class="win" style="left:701px;top:383px;width:466px;height:292px;"><div class="r" style="left:0.00px;top:0.00px;width:466.00px;height:23.00px;background:#2f2f2b;"></div><div class="r" style="left:5.70px;top:5.80px;width:3.40px;height:3.40px;border-radius:50%;background:#4c4c48;"></div><div class="r" style="left:11.50px;top:5.80px;width:3.40px;height:3.40px;border-radius:50%;background:#4c4c48;"></div><div class="r" style="left:17.20px;top:5.80px;width:3.40px;height:3.40px;border-radius:50%;background:#4c4c48;"></div><div class="r" style="left:28.00px;top:5.00px;width:6.00px;height:5.00px;background:transparent;border:0.8px solid #6a6a66;border-radius:1px"></div><div class="r" style="left:38.50px;top:7.20px;width:1.50px;height:0.70px;background:#6a6a66;"></div><div class="t" style="left:45.50px;top:7.30px;font-size:4.5px;color:#6a6a66;font-weight:400;">&#9650;</div><div class="r" style="left:56.50px;top:5.50px;width:4.50px;height:4.00px;background:transparent;border-top:0.8px solid #6a6a66;border-left:0.8px solid #6a6a66;border-radius:3px 3px 0 0"></div><div class="t" style="left:69.00px;top:7.30px;font-size:6.5px;color:#6a6a66;font-weight:400;">&#8249;</div><div class="t" style="left:79.50px;top:7.30px;font-size:6.5px;color:#555;font-weight:400;">&#8250;</div><div class="r" style="left:90.50px;top:5.00px;width:3.00px;height:5.00px;background:transparent;border:0.8px solid #6a6a66;border-top:none"></div><div class="r" style="left:141.00px;top:3.20px;width:177.00px;height:8.60px;background:#2c2c29;border:0.6px solid #363632;border-radius:2px"></div><div class="r" style="left:146.00px;top:5.50px;width:2.20px;height:3.60px;background:#cfcfcf;"></div><div class="t" style="left:83.00px;top:7.40px;width:300px;text-align:center;font-size:3.8px;color:#d8d8d8;font-weight:700;"># lorentsen.blog</div><div class="r" style="left:316.50px;top:6.10px;width:2.60px;height:2.60px;border-radius:50%;background:#3d8cf5;"></div><div class="r" style="left:322.70px;top:6.10px;width:2.60px;height:2.60px;border-radius:50%;background:#9a9a96;"></div><div class="r" style="left:332.50px;top:6.00px;width:1.30px;height:2.80px;background:#888;"></div><div class="r" style="left:335.00px;top:6.00px;width:1.30px;height:2.80px;background:#888;"></div><div class="r" style="left:342.50px;top:7.00px;width:5.00px;height:0.70px;background:#777;"></div><div class="r" style="left:344.60px;top:4.90px;width:0.70px;height:5.00px;background:#777;"></div><div class="r" style="left:445.50px;top:5.50px;width:5.00px;height:3.50px;background:transparent;border:0.8px solid #666;border-radius:2px"></div><div class="r" style="left:456.00px;top:5.00px;width:4.50px;height:4.50px;background:#5a5a56;border-radius:1px"></div><div class="r" style="left:0.00px;top:15.00px;width:82.00px;height:8.00px;background:#1f1f1d;"></div><div class="r" style="left:3.50px;top:17.30px;width:3.20px;height:3.20px;background:#7a7a76;border-radius:0.6px;opacity:0.85"></div><div class="r" style="left:14.00px;top:17.30px;width:3.20px;height:3.20px;background:#7a7a76;border-radius:0.6px;opacity:0.85"></div><div class="r" style="left:24.00px;top:17.30px;width:3.20px;height:3.20px;background:#7a7a76;border-radius:0.6px;opacity:0.85"></div><div class="r" style="left:34.40px;top:17.30px;width:3.20px;height:3.20px;background:#7a7a76;border-radius:0.6px;opacity:0.85"></div><div class="r" style="left:44.70px;top:17.30px;width:3.20px;height:3.20px;background:#7a7a76;border-radius:0.6px;opacity:0.85"></div><div class="r" style="left:55.10px;top:17.30px;width:3.20px;height:3.20px;background:#7a7a76;border-radius:0.6px;opacity:0.85"></div><div class="r" style="left:65.40px;top:17.30px;width:3.20px;height:3.20px;background:#7a7a76;border-radius:0.6px;opacity:0.85"></div><div class="r" style="left:75.80px;top:17.30px;width:3.20px;height:3.20px;background:#7a7a76;border-radius:0.6px;opacity:0.85"></div><div class="r" style="left:20.70px;top:15.50px;width:0.60px;height:7.50px;background:#4a4a46;"></div><div class="r" style="left:51.60px;top:15.50px;width:0.60px;height:7.50px;background:#4a4a46;"></div><div class="r" style="left:82.70px;top:15.50px;width:0.60px;height:7.50px;background:#4a4a46;"></div><div class="r" style="left:184.50px;top:17.30px;width:3.20px;height:3.20px;background:#d8d8d0;"></div><div class="t" style="left:190.00px;top:19.00px;font-size:3.2px;color:#8e8e8a;font-weight:400;transform:scaleX(1.0777);transform-origin:0 0;">anders.lorentsen apple tips og tricks – Tips, tricks og tilbydelser om iPhone, iPad, Mac og hele Apple økosystemet</div><div class="r" style="left:0.00px;top:23.00px;width:466.00px;height:9.00px;background:#1d2026;"></div><div class="r" style="left:3.50px;top:25.20px;width:4.40px;height:4.40px;border-radius:50%;background:transparent;border:0.8px solid #e8e8e8"></div><div class="t" style="left:10.50px;top:27.60px;font-size:3.7px;color:#f0f0f0;font-weight:700;">Ultra-netværket</div><div class="r" style="left:43.60px;top:25.00px;width:5.20px;height:5.20px;background:#f0f0f0;"></div><div class="r" style="left:45.00px;top:26.30px;width:2.60px;height:2.60px;background:#1d2026;"></div><div class="t" style="left:52.00px;top:27.60px;font-size:3.7px;color:#f0f0f0;font-weight:700;">Læser</div><div class="r" style="left:421.00px;top:24.20px;width:17.00px;height:6.60px;background:#16181c;"></div><div class="r" style="left:423.80px;top:26.60px;width:3.00px;height:0.90px;background:#e8e8e8;transform:rotate(-45deg)"></div><div class="t" style="left:428.00px;top:27.60px;font-size:3.6px;color:#e8e8e8;font-weight:700;">Ret</div><div class="r" style="left:434.50px;top:27.00px;width:2.00px;height:1.20px;background:transparent;border-left:1px solid transparent;border-right:1px solid transparent;border-top:1.2px solid #e8e8e8;width:0;height:0"></div><div class="r" style="left:443.70px;top:25.20px;width:4.60px;height:4.60px;border-radius:50%;background:#b89a88;"></div><div class="r" style="left:455.80px;top:25.90px;width:3.20px;height:3.20px;background:#f0f0f0;transform:rotate(45deg);border-radius:0.5px"></div><div class="t" style="left:233.50px;top:27.50px;font-size:3px;color:#e8e8e8;font-weight:400;">&#9650;</div><div class="r" style="left:126.50px;top:37.40px;width:212.00px;height:0.40px;background:#2a2c30;"></div><div class="t" style="left:126.50px;top:56.71px;font-size:14.1px;color:#c4c1ba;font-weight:400;transform:scaleX(1.0153);transform-origin:0 0;">3 yderligere supernyttige</div><div class="t" style="left:126.50px;top:74.21px;font-size:14.1px;color:#c4c1ba;font-weight:400;transform:scaleX(0.9947);transform-origin:0 0;">tastaturgenveje på Mac du måske</div><div class="t" style="left:126.50px;top:91.11px;font-size:14.1px;color:#c4c1ba;font-weight:400;transform:scaleX(0.9947);transform-origin:0 0;">ikke kender?</div><div class="r" style="left:210.00px;top:85.50px;width:12.00px;height:12.00px;border-radius:50%;background:radial-gradient(circle at 40% 40%,#ffd862,#e8a820);"></div><div class="t" style="left:126.50px;top:109.60px;font-size:5.5px;color:#e0ddd6;font-weight:400;transform:scaleX(1.0265);transform-origin:0 0;">I min serie af tastaturgenveje er her et par stykker mere som jeg bruger dagligt: <span style="display:inline-block;position:relative;width:0.95em;height:0"><span style="position:absolute;left:0.05em;bottom:0;width:0.75em;height:0.75em;border:0.12em solid #cfcfcf;border-radius:0.25em"></span></span> +</div><div class="t" style="left:126.50px;top:118.90px;font-size:5.5px;color:#e0ddd6;font-weight:400;transform:scaleX(1.0190);transform-origin:0 0;">Shift + T Hvis du kommer til at lukke en fane i Safari ved en fejl, så kan du genåbne</div><div class="t" style="left:126.50px;top:128.50px;font-size:5.5px;color:#e0ddd6;font-weight:400;transform:scaleX(1.0189);transform-origin:0 0;">den ved at taste <span style="display:inline-block;position:relative;width:0.95em;height:0"><span style="position:absolute;left:0.05em;bottom:0;width:0.75em;height:0.75em;border:0.12em solid #cfcfcf;border-radius:0.25em"></span></span> + Shift + T og hvis du taster genvejen igen åbner den…</div><div class="r" style="left:126.80px;top:139.20px;width:38.00px;height:8.00px;background:#0e2036;border-radius:1px"></div><div class="t" style="left:133.60px;top:143.20px;font-size:4.2px;color:#d0dae8;font-weight:400;transform:scaleX(1.1432);transform-origin:0 0;">Læs Videre</div><div class="t" style="left:126.80px;top:165.20px;font-size:3.7px;color:#d8d8d8;font-weight:700;">Del med andre</div><div class="r" style="left:126.90px;top:171.90px;width:9.20px;height:9.20px;border-radius:50%;background:#3a8fd0;"></div><div class="r" style="left:129.90px;top:174.90px;width:3.20px;height:3.20px;border-radius:50%;background:rgba(255,255,255,0.75);"></div><div class="r" style="left:138.60px;top:171.90px;width:9.20px;height:9.20px;border-radius:50%;background:#2a6aa8;"></div><div class="r" style="left:141.60px;top:174.90px;width:3.20px;height:3.20px;border-radius:50%;background:rgba(255,255,255,0.75);"></div><div class="r" style="left:150.00px;top:171.90px;width:9.20px;height:9.20px;border-radius:50%;background:#303134;"></div><div class="r" style="left:153.00px;top:174.90px;width:3.20px;height:3.20px;border-radius:50%;background:rgba(255,255,255,0.75);"></div><div class="r" style="left:161.40px;top:171.90px;width:9.20px;height:9.20px;border-radius:50%;background:#2556c8;"></div><div class="r" style="left:164.40px;top:174.90px;width:3.20px;height:3.20px;border-radius:50%;background:rgba(255,255,255,0.75);"></div><div class="r" style="left:172.90px;top:171.90px;width:9.20px;height:9.20px;border-radius:50%;background:#3018b0;"></div><div class="r" style="left:175.90px;top:174.90px;width:3.20px;height:3.20px;border-radius:50%;background:rgba(255,255,255,0.75);"></div><div class="r" style="left:184.40px;top:171.90px;width:9.20px;height:9.20px;border-radius:50%;background:#c0202a;"></div><div class="r" style="left:187.40px;top:174.90px;width:3.20px;height:3.20px;border-radius:50%;background:rgba(255,255,255,0.75);"></div><div class="r" style="left:113.50px;top:164.00px;width:16.00px;height:16.00px;border-radius:50%;background:#e0383c;"></div><div class="t" style="left:-28.50px;top:172.40px;width:300px;text-align:center;font-size:9px;color:#fff;font-weight:700;">1</div><div class="t" style="left:126.80px;top:189.80px;font-size:3.4px;color:#3a9ae0;font-weight:400;transform:scaleX(1.0947);transform-origin:0 0;">Dansende sider</div><div class="r" style="left:127.00px;top:201.60px;width:21.00px;height:8.00px;background:transparent;border:0.5px solid #2c2e32;border-radius:1px"></div><div class="r" style="left:129.80px;top:204.00px;width:2.40px;height:3.00px;background:#d8d8d8;"></div><div class="t" style="left:134.00px;top:205.60px;font-size:3.4px;color:#c8c8c8;font-weight:400;">Reblog</div><div class="r" style="left:149.00px;top:201.60px;width:17.00px;height:8.00px;background:transparent;border:0.5px solid #2c2e32;border-radius:1px"></div><div class="r" style="left:151.40px;top:204.40px;width:2.40px;height:2.40px;border-radius:50%;background:transparent;border:0.5px solid #c8c8c8"></div><div class="t" style="left:156.00px;top:205.60px;font-size:3.4px;color:#c8c8c8;font-weight:400;">Like</div><div class="t" style="left:126.80px;top:214.60px;font-size:3.4px;color:#c0c0c0;font-weight:400;transform:scaleX(1.0612);transform-origin:0 0;">Vær den første til at synes om dette.</div><div class="r" style="left:127.00px;top:222.50px;width:3.00px;height:2.60px;background:#9a9a9a;"></div><div class="t" style="left:133.00px;top:224.00px;font-size:3.5px;color:#b8b8b8;font-weight:400;transform:scaleX(1.0450);transform-origin:0 0;">Efterlad en kommentar</div><div class="r" style="left:176.90px;top:222.40px;width:3.20px;height:3.20px;border-radius:50%;background:transparent;border:0.6px solid #aaa"></div><div class="t" style="left:182.00px;top:224.00px;font-size:3.5px;color:#3a9ae0;font-weight:400;transform:scaleX(1.1652);transform-origin:0 0;">4. august 2023</div><div class="r" style="left:216.50px;top:222.60px;width:2.80px;height:2.60px;background:transparent;border:0.6px solid #aaa"></div><div class="t" style="left:222.00px;top:224.00px;font-size:3.5px;color:#b8b8b8;font-weight:400;transform:scaleX(0.9756);transform-origin:0 0;">Udgivelse</div><div class="r" style="left:242.00px;top:223.60px;width:3.00px;height:0.80px;background:#aaa;transform:rotate(-45deg)"></div><div class="t" style="left:247.00px;top:224.00px;font-size:3.5px;color:#b8b8b8;font-weight:400;transform:scaleX(1.2229);transform-origin:0 0;">Redigér</div><div class="r" style="left:126.50px;top:241.50px;width:212.00px;height:0.40px;background:#2a2c30;"></div><div class="t" style="left:126.50px;top:259.71px;font-size:14.1px;color:#c4c1ba;font-weight:400;transform:scaleX(1.0218);transform-origin:0 0;">3 hurtige og nyttige</div><div class="t" style="left:126.50px;top:276.91px;font-size:14.1px;color:#c4c1ba;font-weight:400;transform:scaleX(0.9957);transform-origin:0 0;">tastaturgenveje på din Mac</div><svg class="r" style="left:299px;top:269px" width="14" height="15" viewBox="0 0 14 15"><circle cx="4.2" cy="2.6" r="1.6" fill="#f0e0a0"/><path d="M3.5 4.3 L6.5 4.8 L6.8 9 L3.8 8.8 Z" fill="#e0407a"/><path d="M3.8 8.8 L6.8 9 L6 10.5 L3.5 10.3 Z" fill="#3040b0"/><path d="M4 10 L1.5 13.5 M6 10.3 L10 12.5" stroke="#d8a880" stroke-width="1.1"/><path d="M0.5 13.5 L2.5 14 M9.5 12 L10.5 14" stroke="#203080" stroke-width="1.2"/><path d="M3.5 5.5 L1.2 6.5 M6.5 5.2 L8.2 7.8" stroke="#d8a880" stroke-width="0.9"/></svg><div class="t" style="left:126.80px;top:288.20px;font-size:3.4px;color:#c8c8c8;font-weight:400;transform:scaleX(1.1422);transform-origin:0 0;">anders.lorentsen apple tips og tricks</div><div class="t" style="left:335.50px;top:288.20px;font-size:3.4px;color:#c8c8c8;font-weight:700;">Vf</div><div class="r" style="left:453.20px;top:262.70px;width:9.60px;height:9.60px;border-radius:50%;background:#3478b8;"></div><div class="t" style="left:455.40px;top:267.80px;font-size:4.6px;color:#eef;font-weight:700;">A</div><div class="r" style="left:438.00px;top:279.20px;width:24.00px;height:0.40px;background:#262a30;"></div><div class="r" style="left:440.50px;top:284.20px;width:4.20px;height:0.80px;background:#8a9098;transform:rotate(45deg)"></div><div class="r" style="left:440.50px;top:284.20px;width:4.20px;height:0.80px;background:#8a9098;transform:rotate(-45deg)"></div><div class="r" style="left:454.00px;top:283.70px;width:1.20px;height:1.20px;border-radius:50%;background:#a8aeb6;"></div><div class="r" style="left:456.50px;top:283.70px;width:1.20px;height:1.20px;border-radius:50%;background:#a8aeb6;"></div><div class="r" style="left:459.00px;top:283.70px;width:1.20px;height:1.20px;border-radius:50%;background:#a8aeb6;"></div></div><div class="win" style="left:1259px;top:451px;width:371px;height:270px;background:#2c2b28"><div class="r" style="left:0.00px;top:0.00px;width:371.00px;height:270.00px;background:#2c2b28;"></div><div class="r" style="left:3.90px;top:3.50px;width:3.00px;height:3.00px;border-radius:50%;background:#4e4d48;"></div><div class="r" style="left:9.10px;top:3.50px;width:3.00px;height:3.00px;border-radius:50%;background:#4e4d48;"></div><div class="r" style="left:14.50px;top:3.50px;width:3.00px;height:3.00px;border-radius:50%;background:#4e4d48;"></div><div class="r" style="left:5.00px;top:10.80px;width:71.00px;height:8.50px;background:#3a3936;border-radius:2px"></div><div class="r" style="left:7.90px;top:13.50px;width:2.60px;height:2.60px;border-radius:50%;background:transparent;border:0.5px solid #aaa"></div><div class="t" style="left:12.00px;top:15.00px;font-size:3.6px;color:#9a9a95;font-weight:400;transform:scaleX(1.0010);transform-origin:0 0;">Søg i Kort</div><div class="t" style="left:5.00px;top:25.50px;font-size:3.2px;color:#7a7a75;font-weight:400;transform:scaleX(0.9652);transform-origin:0 0;">Favoritter</div><div class="r" style="left:5.00px;top:31.00px;width:6.00px;height:6.00px;border-radius:50%;background:#3a98e8;"></div><div class="r" style="left:7.00px;top:33.00px;width:2.00px;height:2.00px;border-radius:50%;background:rgba(255,255,255,0.85);"></div><div class="t" style="left:14.00px;top:32.20px;font-size:3.2px;color:#e8e8e2;font-weight:700;transform:scaleX(1.5391);transform-origin:0 0;">Hjem</div><div class="t" style="left:14.00px;top:35.80px;font-size:2.8px;color:#8a8a85;font-weight:400;transform:scaleX(0.8789);transform-origin:0 0;">Tæt på</div><div class="r" style="left:5.00px;top:41.00px;width:6.00px;height:6.00px;border-radius:50%;background:#b87038;"></div><div class="r" style="left:7.00px;top:43.00px;width:2.00px;height:2.00px;border-radius:50%;background:rgba(255,255,255,0.85);"></div><div class="t" style="left:14.00px;top:42.20px;font-size:3.2px;color:#e8e8e2;font-weight:700;transform:scaleX(1.3474);transform-origin:0 0;">Arbejde</div><div class="t" style="left:14.00px;top:45.80px;font-size:2.8px;color:#8a8a85;font-weight:400;transform:scaleX(0.9498);transform-origin:0 0;">6 min</div><div class="r" style="left:5.00px;top:51.60px;width:6.00px;height:6.00px;border-radius:50%;background:#e04848;"></div><div class="r" style="left:7.00px;top:53.60px;width:2.00px;height:2.00px;border-radius:50%;background:rgba(255,255,255,0.85);"></div><div class="t" style="left:14.00px;top:52.80px;font-size:3.2px;color:#e8e8e2;font-weight:700;transform:scaleX(1.3217);transform-origin:0 0;">Bank Nordikon A/S</div><div class="t" style="left:14.00px;top:56.40px;font-size:2.8px;color:#8a8a85;font-weight:400;transform:scaleX(0.9527);transform-origin:0 0;">11 min</div><div class="r" style="left:5.00px;top:62.00px;width:6.00px;height:6.00px;border-radius:50%;background:#3a70e0;"></div><div class="r" style="left:7.00px;top:64.00px;width:2.00px;height:2.00px;border-radius:50%;background:rgba(255,255,255,0.85);"></div><div class="t" style="left:14.00px;top:63.20px;font-size:3.2px;color:#e8e8e2;font-weight:700;transform:scaleX(1.1417);transform-origin:0 0;">Mobilplast</div><div class="t" style="left:14.00px;top:66.80px;font-size:2.8px;color:#8a8a85;font-weight:400;transform:scaleX(0.8504);transform-origin:0 0;">500 km</div><div class="r" style="left:5.00px;top:72.40px;width:6.00px;height:6.00px;border-radius:50%;background:#e04848;"></div><div class="r" style="left:7.00px;top:74.40px;width:2.00px;height:2.00px;border-radius:50%;background:rgba(255,255,255,0.85);"></div><div class="t" style="left:14.00px;top:73.60px;font-size:3.2px;color:#e8e8e2;font-weight:700;transform:scaleX(0.8957);transform-origin:0 0;">Blomsterhuset</div><div class="t" style="left:14.00px;top:77.20px;font-size:2.8px;color:#8a8a85;font-weight:400;transform:scaleX(0.8504);transform-origin:0 0;">500 km</div><div class="r" style="left:5.00px;top:82.60px;width:6.00px;height:6.00px;border-radius:50%;background:#e04848;"></div><div class="r" style="left:7.00px;top:84.60px;width:2.00px;height:2.00px;border-radius:50%;background:rgba(255,255,255,0.85);"></div><div class="t" style="left:14.00px;top:83.80px;font-size:3.2px;color:#e8e8e2;font-weight:700;transform:scaleX(1.1055);transform-origin:0 0;">Laserdo Sporten</div><div class="t" style="left:14.00px;top:87.40px;font-size:2.8px;color:#8a8a85;font-weight:400;transform:scaleX(0.9279);transform-origin:0 0;">12 min</div><div class="r" style="left:5.00px;top:93.00px;width:6.00px;height:6.00px;border-radius:50%;background:#e04848;"></div><div class="r" style="left:7.00px;top:95.00px;width:2.00px;height:2.00px;border-radius:50%;background:rgba(255,255,255,0.85);"></div><div class="t" style="left:14.00px;top:94.20px;font-size:3.2px;color:#e8e8e2;font-weight:700;transform:scaleX(1.1228);transform-origin:0 0;">Amagervej 28, Aalborg Øst, Aalborg</div><div class="t" style="left:14.00px;top:97.80px;font-size:2.8px;color:#8a8a85;font-weight:400;transform:scaleX(0.9279);transform-origin:0 0;">12 min</div><div class="r" style="left:5.00px;top:103.00px;width:6.00px;height:6.00px;border-radius:50%;background:#e04848;"></div><div class="r" style="left:7.00px;top:105.00px;width:2.00px;height:2.00px;border-radius:50%;background:rgba(255,255,255,0.85);"></div><div class="t" style="left:14.00px;top:104.20px;font-size:3.2px;color:#e8e8e2;font-weight:700;transform:scaleX(1.0798);transform-origin:0 0;">Dalsgaard Bil</div><div class="t" style="left:14.00px;top:107.80px;font-size:2.8px;color:#8a8a85;font-weight:400;transform:scaleX(0.8758);transform-origin:0 0;">11 km</div><div class="r" style="left:5.00px;top:113.30px;width:6.00px;height:6.00px;border-radius:50%;background:#3a70e0;"></div><div class="r" style="left:7.00px;top:115.30px;width:2.00px;height:2.00px;border-radius:50%;background:rgba(255,255,255,0.85);"></div><div class="t" style="left:14.00px;top:114.50px;font-size:3.2px;color:#e8e8e2;font-weight:700;transform:scaleX(0.8130);transform-origin:0 0;">Kunstmuseum</div><div class="t" style="left:14.00px;top:118.10px;font-size:2.8px;color:#8a8a85;font-weight:400;transform:scaleX(0.8525);transform-origin:0 0;">34 km</div><div class="r" style="left:5.00px;top:123.60px;width:6.00px;height:6.00px;border-radius:50%;background:#e04848;"></div><div class="r" style="left:7.00px;top:125.60px;width:2.00px;height:2.00px;border-radius:50%;background:rgba(255,255,255,0.85);"></div><div class="t" style="left:14.00px;top:124.80px;font-size:3.2px;color:#e8e8e2;font-weight:700;transform:scaleX(0.9033);transform-origin:0 0;">Lindholm Høje</div><div class="t" style="left:14.00px;top:128.40px;font-size:2.8px;color:#8a8a85;font-weight:400;transform:scaleX(0.8525);transform-origin:0 0;">10 km</div><div class="t" style="left:5.00px;top:135.50px;font-size:3.2px;color:#7a7a75;font-weight:400;transform:scaleX(0.9006);transform-origin:0 0;">Mine guider</div><div class="r" style="left:5.00px;top:142.00px;width:6.00px;height:6.00px;background:linear-gradient(180deg,#3a5ab0 40%,#e8a040 40%);border-radius:1px"></div><div class="t" style="left:14.00px;top:143.50px;font-size:3.2px;color:#e8e8e2;font-weight:700;transform:scaleX(0.7901);transform-origin:0 0;">Mine steder</div><div class="t" style="left:14.00px;top:147.00px;font-size:2.8px;color:#8a8a85;font-weight:400;transform:scaleX(0.9892);transform-origin:0 0;">7 steder</div><div class="t" style="left:8.00px;top:152.40px;font-size:3.2px;color:#7a7a75;font-weight:400;transform:scaleX(0.8060);transform-origin:0 0;">Nyligt besøgt</div><div class="r" style="left:8.30px;top:158.00px;width:6.00px;height:6.00px;border-radius:50%;background:#9a9a96;"></div><div class="r" style="left:10.30px;top:160.00px;width:2.00px;height:2.00px;border-radius:50%;background:rgba(255,255,255,0.85);"></div><div class="t" style="left:17.50px;top:159.20px;font-size:3.2px;color:#e8e8e2;font-weight:700;transform:scaleX(0.5470);transform-origin:0 0;">Vesthimmerlands Museum</div><div class="t" style="left:17.50px;top:162.80px;font-size:2.8px;color:#8a8a85;font-weight:400;transform:scaleX(0.7096);transform-origin:0 0;">Aalborg, Danmark</div><div class="r" style="left:8.30px;top:168.60px;width:6.00px;height:6.00px;border-radius:50%;background:#e04848;"></div><div class="r" style="left:10.30px;top:170.60px;width:2.00px;height:2.00px;border-radius:50%;background:rgba(255,255,255,0.85);"></div><div class="t" style="left:17.50px;top:169.80px;font-size:3.2px;color:#e8e8e2;font-weight:700;transform:scaleX(0.7544);transform-origin:0 0;">Nordjyllands Statsbibliotek</div><div class="t" style="left:17.50px;top:173.40px;font-size:2.8px;color:#8a8a85;font-weight:400;transform:scaleX(0.7096);transform-origin:0 0;">Aalborg, Danmark</div><div class="r" style="left:8.30px;top:178.60px;width:6.00px;height:6.00px;border-radius:50%;background:#e04848;"></div><div class="r" style="left:10.30px;top:180.60px;width:2.00px;height:2.00px;border-radius:50%;background:rgba(255,255,255,0.85);"></div><div class="t" style="left:17.50px;top:179.80px;font-size:3.2px;color:#e8e8e2;font-weight:700;transform:scaleX(0.9309);transform-origin:0 0;">Skalli Hotel</div><div class="t" style="left:17.50px;top:183.40px;font-size:2.8px;color:#8a8a85;font-weight:400;transform:scaleX(0.7096);transform-origin:0 0;">Aalborg, Danmark</div><div class="r" style="left:8.30px;top:189.00px;width:6.00px;height:6.00px;border-radius:50%;background:#3ab048;"></div><div class="r" style="left:10.30px;top:191.00px;width:2.00px;height:2.00px;border-radius:50%;background:rgba(255,255,255,0.85);"></div><div class="t" style="left:17.50px;top:190.20px;font-size:3.2px;color:#e8e8e2;font-weight:700;transform:scaleX(0.9891);transform-origin:0 0;">AAU Business Transport Center</div><div class="t" style="left:17.50px;top:193.80px;font-size:2.8px;color:#8a8a85;font-weight:400;transform:scaleX(0.7096);transform-origin:0 0;">Aalborg, Danmark</div><div class="r" style="left:8.30px;top:199.00px;width:6.00px;height:6.00px;border-radius:50%;background:#e04848;"></div><div class="r" style="left:10.30px;top:201.00px;width:2.00px;height:2.00px;border-radius:50%;background:rgba(255,255,255,0.85);"></div><div class="t" style="left:17.50px;top:200.20px;font-size:3.2px;color:#e8e8e2;font-weight:700;transform:scaleX(0.7953);transform-origin:0 0;">Vesthimmerlands</div><div class="t" style="left:17.50px;top:203.80px;font-size:2.8px;color:#8a8a85;font-weight:400;transform:scaleX(0.7096);transform-origin:0 0;">Aalborg, Danmark</div><div class="r" style="left:8.30px;top:209.40px;width:6.00px;height:6.00px;border-radius:50%;background:#e04848;"></div><div class="r" style="left:10.30px;top:211.40px;width:2.00px;height:2.00px;border-radius:50%;background:rgba(255,255,255,0.85);"></div><div class="t" style="left:17.50px;top:210.60px;font-size:3.2px;color:#e8e8e2;font-weight:700;transform:scaleX(0.9250);transform-origin:0 0;">Rosendalsvej 11, 9000 Aalborg</div><div class="t" style="left:17.50px;top:214.20px;font-size:2.8px;color:#8a8a85;font-weight:400;transform:scaleX(0.7096);transform-origin:0 0;">Aalborg, Danmark</div><div class="r" style="left:8.30px;top:219.60px;width:6.00px;height:6.00px;border-radius:50%;background:#e04848;"></div><div class="r" style="left:10.30px;top:221.60px;width:2.00px;height:2.00px;border-radius:50%;background:rgba(255,255,255,0.85);"></div><div class="t" style="left:17.50px;top:220.80px;font-size:3.2px;color:#e8e8e2;font-weight:700;transform:scaleX(0.6856);transform-origin:0 0;">Ørbæk Camping</div><div class="t" style="left:17.50px;top:224.40px;font-size:2.8px;color:#8a8a85;font-weight:400;transform:scaleX(0.7096);transform-origin:0 0;">Aalborg, Danmark</div><div class="r" style="left:8.30px;top:229.60px;width:6.00px;height:6.00px;border-radius:50%;background:#e04848;"></div><div class="r" style="left:10.30px;top:231.60px;width:2.00px;height:2.00px;border-radius:50%;background:rgba(255,255,255,0.85);"></div><div class="t" style="left:17.50px;top:230.80px;font-size:3.2px;color:#e8e8e2;font-weight:700;transform:scaleX(0.8337);transform-origin:0 0;">Nibe Havn</div><div class="t" style="left:17.50px;top:234.40px;font-size:2.8px;color:#8a8a85;font-weight:400;transform:scaleX(0.7096);transform-origin:0 0;">Aalborg, Danmark</div><div class="r" style="left:8.30px;top:240.00px;width:6.00px;height:6.00px;border-radius:50%;background:#e04848;"></div><div class="r" style="left:10.30px;top:242.00px;width:2.00px;height:2.00px;border-radius:50%;background:rgba(255,255,255,0.85);"></div><div class="t" style="left:17.50px;top:241.20px;font-size:3.2px;color:#e8e8e2;font-weight:700;transform:scaleX(0.7867);transform-origin:0 0;">Hotel Fjordhøj</div><div class="t" style="left:17.50px;top:244.80px;font-size:2.8px;color:#8a8a85;font-weight:400;transform:scaleX(0.7096);transform-origin:0 0;">Aalborg, Danmark</div><div class="r" style="left:8.30px;top:250.00px;width:6.00px;height:6.00px;border-radius:50%;background:#e04848;"></div><div class="r" style="left:10.30px;top:252.00px;width:2.00px;height:2.00px;border-radius:50%;background:rgba(255,255,255,0.85);"></div><div class="t" style="left:17.50px;top:251.20px;font-size:3.2px;color:#e8e8e2;font-weight:700;transform:scaleX(0.8022);transform-origin:0 0;">Lyngen</div><div class="t" style="left:17.50px;top:254.80px;font-size:2.8px;color:#8a8a85;font-weight:400;transform:scaleX(0.7096);transform-origin:0 0;">Aalborg, Danmark</div><div class="r" style="left:8.30px;top:260.40px;width:6.00px;height:6.00px;border-radius:50%;background:#3ab048;"></div><div class="r" style="left:10.30px;top:262.40px;width:2.00px;height:2.00px;border-radius:50%;background:rgba(255,255,255,0.85);"></div><div class="t" style="left:17.50px;top:261.60px;font-size:3.2px;color:#e8e8e2;font-weight:700;transform:scaleX(0.8096);transform-origin:0 0;">Aalborg Storcenter Parkering</div><div class="t" style="left:17.50px;top:265.20px;font-size:2.8px;color:#8a8a85;font-weight:400;transform:scaleX(0.7096);transform-origin:0 0;">Aalborg, Danmark</div><div class="r" style="left:81.00px;top:0.00px;width:0.60px;height:270.00px;background:#1e1e1c;"></div><div class="r" style="left:87.00px;top:3.00px;width:3.50px;height:4.00px;background:transparent;border:0.6px solid #888;border-radius:0.8px"></div><div class="t" style="left:94.00px;top:5.00px;font-size:3.6px;color:#b8b8b2;font-weight:400;transform:scaleX(1.0964);transform-origin:0 0;">Danmark</div><div class="r" style="left:292.50px;top:3.80px;width:3.00px;height:2.40px;background:#6a6a66;border-radius:0.6px;opacity:0.7"></div><div class="r" style="left:303.50px;top:3.80px;width:3.00px;height:2.40px;background:#6a6a66;border-radius:0.6px;opacity:0.7"></div><div class="r" style="left:313.50px;top:3.80px;width:3.00px;height:2.40px;background:#6a6a66;border-radius:0.6px;opacity:0.7"></div><div class="r" style="left:325.50px;top:3.80px;width:3.00px;height:2.40px;background:#6a6a66;border-radius:0.6px;opacity:0.7"></div><div class="r" style="left:335.50px;top:3.80px;width:3.00px;height:2.40px;background:#6a6a66;border-radius:0.6px;opacity:0.7"></div><div class="r" style="left:344.50px;top:3.80px;width:3.00px;height:2.40px;background:#6a6a66;border-radius:0.6px;opacity:0.7"></div><div class="r" style="left:354.50px;top:3.80px;width:3.00px;height:2.40px;background:#6a6a66;border-radius:0.6px;opacity:0.7"></div><div class="r" style="left:363.50px;top:3.80px;width:3.00px;height:2.40px;background:#6a6a66;border-radius:0.6px;opacity:0.7"></div><svg class="r" style="left:81px;top:11px" width="290" height="259" viewBox="81 11 290 259"><defs><filter id="mb"><feGaussianBlur stdDeviation="0.4"/></filter><linearGradient id="land" x1="0" y1="0" x2="0.3" y2="1"><stop offset="0" stop-color="#687a46"/><stop offset="0.5" stop-color="#647642"/><stop offset="1" stop-color="#6e7446"/></linearGradient></defs><rect x="81" y="11" width="290" height="259" fill="#33587a"/><rect x="81" y="100" width="248" height="170" fill="#2e526f"/><path d="M281.6 42.4 L276.4 48.9 L271.3 66.9 L275.1 84.9 L276.4 108 L266.1 136.3 L258.4 146.6 L261 190.3 L261 205.7 L294.4 210.8 L307.3 223.7 L302.1 244.3 L291.8 257.1 L281.6 270 L91.3 270 L92.6 200.6 L101.6 177.4 L117 144 L131.1 128.6 L163.3 126 L204.4 108 L232.7 63 L262 52 Z" fill="url(#land)" filter="url(#mb)"/><ellipse cx="312" cy="108" rx="11" ry="5" transform="rotate(-20 312 108)" fill="#6a7848"/><path d="M348 11 L371 11 L371 64 L360 60 L355 40 L350 25 Z" fill="#687a48"/><ellipse cx="356" cy="183" rx="4" ry="1.8" transform="rotate(-30 356 183)" fill="#6a7848"/><clipPath id="landClip"><path d="M281.6 42.4 L276.4 48.9 L271.3 66.9 L275.1 84.9 L276.4 108 L266.1 136.3 L258.4 146.6 L261 190.3 L261 205.7 L294.4 210.8 L307.3 223.7 L302.1 244.3 L291.8 257.1 L281.6 270 L91.3 270 L92.6 200.6 L101.6 177.4 L117 144 L131.1 128.6 L163.3 126 L204.4 108 L232.7 63 L262 52 Z"/></clipPath><filter id="noiseF" x="0" y="0" width="100%" height="100%"><feTurbulence type="fractalNoise" baseFrequency="0.35" numOctaves="2" seed="3"/><feColorMatrix type="matrix" values="0 0 0 0 0.2  0 0 0 0 0.25  0 0 0 0 0.1  0 0 0 -2.2 1.3"/></filter><filter id="patchD" x="0" y="0" width="100%" height="100%"><feTurbulence type="fractalNoise" baseFrequency="0.07" numOctaves="2" seed="5"/><feColorMatrix type="matrix" values="0 0 0 0 0.27  0 0 0 0 0.40  0 0 0 0 0.22  3.2 0 0 0 -1.55"/></filter><filter id="patchT" x="0" y="0" width="100%" height="100%"><feTurbulence type="fractalNoise" baseFrequency="0.06" numOctaves="2" seed="11"/><feColorMatrix type="matrix" values="0 0 0 0 0.56  0 0 0 0 0.49  0 0 0 0 0.31  3.2 0 0 0 -1.6"/></filter><g clip-path="url(#landClip)"><rect x="81" y="11" width="290" height="259" filter="url(#patchT)" opacity="0.3"/><rect x="81" y="11" width="290" height="259" filter="url(#patchD)" opacity="0.35"/><rect x="81" y="11" width="290" height="259" filter="url(#noiseF)" opacity="0.5"/></g><path d="M260.7 152 C255 149 248 146 239 143 C232 138 228 135 224.8 134.8 C218 135 214 136 210.4 136.3 C204 138 200 139 196 140.6 C190 143 185 145 181.6 146.3 L173 149.2" stroke="#2f5470" stroke-width="2.6" fill="none"/><ellipse cx="166" cy="156" rx="12.5" ry="10" fill="#2f5470"/><path d="M161.5 166 C164 175 166 183 167.3 188 C170 192 172 194 174.4 193.8 C178 194 182 193 184.5 193.8 C184 198 183 202 181.6 205.3" stroke="#2f5470" stroke-width="3" fill="none"/><ellipse cx="137" cy="177" rx="15" ry="6.5" transform="rotate(-8 137 177)" fill="#2f5470"/><ellipse cx="113" cy="197" rx="13" ry="10" fill="#2f5470"/><ellipse cx="135" cy="208" rx="5.5" ry="8.5" fill="#2f5470"/><path d="M164 128 C163 136 165 142 167 148 M144 146 C147 149 150 151 153 153" stroke="#2f5470" stroke-width="2" fill="none"/><ellipse cx="98" cy="232" rx="5" ry="11" fill="#2f5470"/><path d="M99.7 185.1 L114 197.3 L115.5 189.4 L128.4 188 L135.6 194.5 L148.6 185.1 L154.3 165 L165.8 162.1 L173 180.8 L175.9 186.6 L170.1 193.8 L184.5 192.3 L196 190.9 L200.3 196.6 L210.4 202.4 L223.3 208.1 L239.1 199.5 L253.5 185.1 L261 185.1" stroke="#c8c8c8" stroke-width="0.6" fill="none" opacity="0.8"/></svg><div class="r" style="left:231.00px;top:62.40px;width:1.20px;height:1.20px;background:#111;"></div><div class="t" style="left:233.00px;top:63.00px;font-size:2.8px;color:#f0f0f0;font-weight:700;">Hirtshals</div><div class="r" style="left:239.00px;top:79.40px;width:1.20px;height:1.20px;background:#111;"></div><div class="t" style="left:241.00px;top:80.00px;font-size:2.8px;color:#f0f0f0;font-weight:700;">Hjørring</div><div class="r" style="left:277.00px;top:83.40px;width:1.20px;height:1.20px;background:#111;"></div><div class="t" style="left:279.00px;top:84.00px;font-size:2.8px;color:#f0f0f0;font-weight:700;">Frederikshavn</div><div class="r" style="left:189.00px;top:93.40px;width:1.20px;height:1.20px;background:#111;"></div><div class="t" style="left:191.00px;top:94.00px;font-size:2.8px;color:#f0f0f0;font-weight:700;">Jammerbugten</div><div class="r" style="left:207.00px;top:117.40px;width:1.20px;height:1.20px;background:#111;"></div><div class="t" style="left:209.00px;top:118.00px;font-size:2.8px;color:#f0f0f0;font-weight:700;">Brønderslev</div><div class="r" style="left:219.00px;top:122.40px;width:1.20px;height:1.20px;background:#111;"></div><div class="t" style="left:221.00px;top:123.00px;font-size:2.8px;color:#f0f0f0;font-weight:700;">Vendsyssel</div><div class="r" style="left:229.00px;top:133.40px;width:1.20px;height:1.20px;background:#111;"></div><div class="t" style="left:231.00px;top:134.00px;font-size:2.8px;color:#f0f0f0;font-weight:700;">Nørresundby</div><div class="r" style="left:137.00px;top:128.40px;width:1.20px;height:1.20px;background:#111;"></div><div class="t" style="left:139.00px;top:129.00px;font-size:2.8px;color:#f0f0f0;font-weight:700;">Hanstholm</div><div class="r" style="left:119.00px;top:138.40px;width:1.20px;height:1.20px;background:#111;"></div><div class="t" style="left:121.00px;top:139.00px;font-size:2.8px;color:#f0f0f0;font-weight:700;">Thisted</div><div class="r" style="left:127.00px;top:159.40px;width:1.20px;height:1.20px;background:#111;"></div><div class="t" style="left:129.00px;top:160.00px;font-size:2.8px;color:#f0f0f0;font-weight:700;">Nykøbing</div><div class="r" style="left:199.00px;top:165.40px;width:1.20px;height:1.20px;background:#111;"></div><div class="t" style="left:201.00px;top:166.00px;font-size:2.8px;color:#f0f0f0;font-weight:700;">Himmerland</div><div class="r" style="left:227.00px;top:180.40px;width:1.20px;height:1.20px;background:#111;"></div><div class="t" style="left:229.00px;top:181.00px;font-size:2.8px;color:#f0f0f0;font-weight:700;">Støvring</div><div class="r" style="left:139.00px;top:214.40px;width:1.20px;height:1.20px;background:#111;"></div><div class="t" style="left:141.00px;top:215.00px;font-size:2.8px;color:#f0f0f0;font-weight:700;">Skive</div><div class="r" style="left:189.00px;top:213.40px;width:1.20px;height:1.20px;background:#111;"></div><div class="t" style="left:191.00px;top:214.00px;font-size:2.8px;color:#f0f0f0;font-weight:700;">Viborg</div><div class="r" style="left:237.00px;top:218.40px;width:1.20px;height:1.20px;background:#111;"></div><div class="t" style="left:239.00px;top:219.00px;font-size:2.8px;color:#f0f0f0;font-weight:700;">Randers</div><div class="r" style="left:301.00px;top:224.40px;width:1.20px;height:1.20px;background:#111;"></div><div class="t" style="left:303.00px;top:225.00px;font-size:2.8px;color:#f0f0f0;font-weight:700;">Grenaa</div><div class="r" style="left:199.00px;top:231.40px;width:1.20px;height:1.20px;background:#111;"></div><div class="t" style="left:201.00px;top:232.00px;font-size:2.8px;color:#f0f0f0;font-weight:700;">Bjerringbro</div><div class="r" style="left:164.00px;top:245.40px;width:1.20px;height:1.20px;background:#111;"></div><div class="t" style="left:166.00px;top:246.00px;font-size:2.8px;color:#f0f0f0;font-weight:700;">Holstebro</div><div class="r" style="left:209.00px;top:255.40px;width:1.20px;height:1.20px;background:#111;"></div><div class="t" style="left:211.00px;top:256.00px;font-size:2.8px;color:#f0f0f0;font-weight:700;">Silkeborg</div><div class="r" style="left:189.00px;top:262.40px;width:1.20px;height:1.20px;background:#111;"></div><div class="t" style="left:191.00px;top:263.00px;font-size:2.8px;color:#f0f0f0;font-weight:700;">Herning</div><div class="r" style="left:257.00px;top:259.40px;width:1.20px;height:1.20px;background:#111;"></div><div class="t" style="left:259.00px;top:260.00px;font-size:2.8px;color:#f0f0f0;font-weight:700;">Aarhus</div><div class="r" style="left:286.00px;top:255.40px;width:1.20px;height:1.20px;background:#111;"></div><div class="t" style="left:288.00px;top:256.00px;font-size:2.8px;color:#f0f0f0;font-weight:700;">Ebeltoft</div><div class="t" style="left:260.00px;top:138.00px;font-size:4px;color:#ffffff;font-weight:700;">Aalborg</div><div class="r" style="left:222.20px;top:138.60px;width:5.60px;height:5.60px;border-radius:50%;background:#3a88f0;border:0.8px solid #fff"></div><div class="r" style="left:87.00px;top:19.50px;width:31.00px;height:1.00px;background:#111;"></div><div class="r" style="left:87.00px;top:19.50px;width:15.00px;height:1.00px;background:#ddd;"></div><div class="t" style="left:87.00px;top:16.00px;font-size:3px;color:#eee;font-weight:700;">&lt;</div><div class="t" style="left:99.00px;top:16.00px;font-size:3px;color:#eee;font-weight:700;">0,4</div><div class="t" style="left:115.00px;top:16.00px;font-size:3px;color:#eee;font-weight:700;">28 km</div><div class="r" style="left:86.00px;top:259.00px;width:14.00px;height:6.00px;background:rgba(60,60,60,0.75);border-radius:3px"></div><div class="t" style="left:88.00px;top:262.00px;font-size:2.8px;color:#bbb;font-weight:400;">29.20</div><div class="r" style="left:337.50px;top:258.50px;width:14.00px;height:7.00px;background:rgba(60,60,60,0.85);border-radius:3px"></div><div class="t" style="left:339.50px;top:262.00px;font-size:3.5px;color:#ccc;font-weight:700;">&#8211;  +</div><div class="r" style="left:354.00px;top:252.50px;width:13.00px;height:13.00px;border-radius:50%;background:#2a2a2a;"></div><div class="t" style="left:358.80px;top:259.40px;font-size:4.2px;color:#ddd;font-weight:700;">N</div><div class="r" style="left:359.60px;top:252.90px;width:1.80px;height:1.80px;border-radius:50%;background:#ff3030;"></div></div><div class="win" style="left:224px;top:687px;width:472px;height:292px;"><div class="r" style="left:0;top:0;width:466px;height:23px;transform:scaleX(1.01288);transform-origin:0 0"><div class="r" style="left:0.00px;top:0.00px;width:466.00px;height:23.00px;background:#2f2f2b;"></div><div class="r" style="left:5.70px;top:5.80px;width:3.40px;height:3.40px;border-radius:50%;background:#4c4c48;"></div><div class="r" style="left:11.50px;top:5.80px;width:3.40px;height:3.40px;border-radius:50%;background:#4c4c48;"></div><div class="r" style="left:17.20px;top:5.80px;width:3.40px;height:3.40px;border-radius:50%;background:#4c4c48;"></div><div class="r" style="left:28.00px;top:5.00px;width:6.00px;height:5.00px;background:transparent;border:0.8px solid #6a6a66;border-radius:1px"></div><div class="r" style="left:38.50px;top:7.20px;width:1.50px;height:0.70px;background:#6a6a66;"></div><div class="t" style="left:45.50px;top:7.30px;font-size:4.5px;color:#6a6a66;font-weight:400;">&#9650;</div><div class="r" style="left:56.50px;top:5.50px;width:4.50px;height:4.00px;background:transparent;border-top:0.8px solid #6a6a66;border-left:0.8px solid #6a6a66;border-radius:3px 3px 0 0"></div><div class="t" style="left:69.00px;top:7.30px;font-size:6.5px;color:#6a6a66;font-weight:400;">&#8249;</div><div class="t" style="left:79.50px;top:7.30px;font-size:6.5px;color:#555;font-weight:400;">&#8250;</div><div class="r" style="left:90.50px;top:5.00px;width:3.00px;height:5.00px;background:transparent;border:0.8px solid #6a6a66;border-top:none"></div><div class="r" style="left:141.00px;top:3.20px;width:177.00px;height:8.60px;background:#2c2c29;border:0.6px solid #363632;border-radius:2px"></div><div class="r" style="left:146.00px;top:5.50px;width:2.20px;height:3.60px;background:#cfcfcf;"></div><div class="t" style="left:83.00px;top:7.40px;width:300px;text-align:center;font-size:3.8px;color:#d8d8d8;font-weight:700;"># fadel.io</div><div class="r" style="left:316.50px;top:6.10px;width:2.60px;height:2.60px;border-radius:50%;background:#3d8cf5;"></div><div class="r" style="left:322.70px;top:6.10px;width:2.60px;height:2.60px;border-radius:50%;background:#9a9a96;"></div><div class="r" style="left:332.50px;top:6.00px;width:1.30px;height:2.80px;background:#888;"></div><div class="r" style="left:335.00px;top:6.00px;width:1.30px;height:2.80px;background:#888;"></div><div class="r" style="left:342.50px;top:7.00px;width:5.00px;height:0.70px;background:#777;"></div><div class="r" style="left:344.60px;top:4.90px;width:0.70px;height:5.00px;background:#777;"></div><div class="r" style="left:445.50px;top:5.50px;width:5.00px;height:3.50px;background:transparent;border:0.8px solid #666;border-radius:2px"></div><div class="r" style="left:456.00px;top:5.00px;width:4.50px;height:4.50px;background:#5a5a56;border-radius:1px"></div><div class="r" style="left:0.00px;top:15.00px;width:82.00px;height:8.00px;background:#1f1f1d;"></div><div class="r" style="left:3.50px;top:17.30px;width:3.20px;height:3.20px;background:#7a7a76;border-radius:0.6px;opacity:0.85"></div><div class="r" style="left:14.00px;top:17.30px;width:3.20px;height:3.20px;background:#7a7a76;border-radius:0.6px;opacity:0.85"></div><div class="r" style="left:24.00px;top:17.30px;width:3.20px;height:3.20px;background:#7a7a76;border-radius:0.6px;opacity:0.85"></div><div class="r" style="left:34.40px;top:17.30px;width:3.20px;height:3.20px;background:#7a7a76;border-radius:0.6px;opacity:0.85"></div><div class="r" style="left:44.70px;top:17.30px;width:3.20px;height:3.20px;background:#7a7a76;border-radius:0.6px;opacity:0.85"></div><div class="r" style="left:55.10px;top:17.30px;width:3.20px;height:3.20px;background:#7a7a76;border-radius:0.6px;opacity:0.85"></div><div class="r" style="left:65.40px;top:17.30px;width:3.20px;height:3.20px;background:#7a7a76;border-radius:0.6px;opacity:0.85"></div><div class="r" style="left:75.80px;top:17.30px;width:3.20px;height:3.20px;background:#7a7a76;border-radius:0.6px;opacity:0.85"></div><div class="r" style="left:20.70px;top:15.50px;width:0.60px;height:7.50px;background:#4a4a46;"></div><div class="r" style="left:51.60px;top:15.50px;width:0.60px;height:7.50px;background:#4a4a46;"></div><div class="r" style="left:82.70px;top:15.50px;width:0.60px;height:7.50px;background:#4a4a46;"></div><div class="r" style="left:82.70px;top:15.00px;width:255.00px;height:8.00px;background:#1f1f1d;"></div><div class="r" style="left:209.30px;top:15.50px;width:0.60px;height:7.50px;background:#3a3a36;"></div><div class="r" style="left:337.60px;top:15.50px;width:0.60px;height:7.50px;background:#3a3a36;"></div><div class="r" style="left:136.30px;top:17.80px;width:2.40px;height:2.40px;border-radius:50%;background:transparent;border:0.5px solid #777"></div><div class="t" style="left:140.50px;top:19.00px;font-size:3.2px;color:#6e6e6a;font-weight:400;transform:scaleX(0.5393);transform-origin:0 0;">Mission Control</div><div class="r" style="left:260.50px;top:17.30px;width:2.80px;height:3.40px;background:transparent;border:0.5px solid #888"></div><div class="t" style="left:265.00px;top:19.00px;font-size:3.2px;color:#6e6e6a;font-weight:400;transform:scaleX(0.5748);transform-origin:0 0;">fadel.io – Home</div><div class="r" style="left:351.00px;top:17.50px;width:0.80px;height:3.00px;background:#8a8a86;"></div><div class="t" style="left:354.00px;top:19.00px;font-size:3.2px;color:#8e8e8a;font-weight:400;transform:scaleX(1.1348);transform-origin:0 0;">Mission Control Plus – Put the control back in Mission Control</div></div><div class="r" style="left:0.00px;top:23.00px;width:472.00px;height:15.00px;background:#1c1d1f;"></div><div class="t" style="left:98.00px;top:29.50px;font-size:7.5px;color:#e8e8e8;font-weight:700;">F</div><div class="t" style="left:342.00px;top:30.00px;font-size:3.8px;color:#d8d8d8;font-weight:400;transform:scaleX(1.0847);transform-origin:0 0;">Home</div><div class="t" style="left:360.00px;top:30.00px;font-size:3.8px;color:#d8d8d8;font-weight:400;transform:scaleX(1.3082);transform-origin:0 0;">About</div><div class="r" style="left:0.00px;top:38.00px;width:472.00px;height:125.00px;background:#1e1f21;"></div><div class="r" style="left:221.00px;top:54.00px;width:30.00px;height:30.00px;background:linear-gradient(180deg,#7a808c,#4a4f58);border-radius:7px"></div><div class="r" style="left:225.50px;top:61.50px;width:11.00px;height:6.50px;background:#e08a40;border-top:1px solid #e8e0d0"></div><div class="r" style="left:226.50px;top:70.50px;width:10.00px;height:7.00px;background:#4a78e0;border-top:1px solid #c8d0e8"></div><div class="r" style="left:238.80px;top:64.00px;width:8.00px;height:11.00px;background:#3a9a90;border-top:1px solid #d0d8d8"></div><div class="r" style="left:244.00px;top:53.00px;width:9.00px;height:9.00px;border-radius:50%;background:#3a70e0;border:0.6px solid #fff"></div><div class="r" style="left:246.30px;top:57.10px;width:4.40px;height:0.90px;background:#fff;"></div><div class="r" style="left:248.05px;top:55.30px;width:0.90px;height:4.40px;background:#fff;"></div><div class="t" style="left:193.00px;top:94.00px;font-size:8.6px;color:#e8e8e8;font-weight:700;transform:scaleX(0.9945);transform-origin:0 0;">Mission Control Plus</div><div class="t" style="left:185.00px;top:102.00px;font-size:4.2px;color:#dcdcdc;font-weight:400;transform:scaleX(1.3454);transform-origin:0 0;">Put the &#8216;control&#8217; back in Mission Control.</div><div class="t" style="left:174.00px;top:116.00px;font-size:3.9px;color:#b8b8b8;font-weight:400;transform:scaleX(1.2231);transform-origin:0 0;">Manage your windows in Mission Control adding keyboard</div><div class="t" style="left:202.00px;top:122.60px;font-size:3.9px;color:#b8b8b8;font-weight:400;transform:scaleX(1.0051);transform-origin:0 0;">navigation, window closing and more.</div><div class="r" style="left:158.00px;top:132.00px;width:54.00px;height:11.00px;background:#2c56b8;border-radius:1px"></div><div class="t" style="left:162.50px;top:137.50px;font-size:3.8px;color:#ffffff;font-weight:700;transform:scaleX(1.2468);transform-origin:0 0;">Buy Now DKK 79,63</div><div class="r" style="left:214.50px;top:133.00px;width:0.50px;height:9.00px;background:#4a4a4a;"></div><div class="t" style="left:219.00px;top:137.50px;font-size:3.7px;color:#5a90f0;font-weight:400;transform:scaleX(1.2864);transform-origin:0 0;">Download 14 days trial</div><div class="r" style="left:274.00px;top:131.00px;width:35.00px;height:12.00px;background:#000;border:0.5px solid #444;border-radius:1.5px"></div><div class="r" style="left:279.20px;top:133.50px;width:3.00px;height:6.50px;background:#d8a078;border-radius:1.5px"></div><div class="r" style="left:286.00px;top:135.00px;width:18.00px;height:1.20px;background:#2a2a2a;"></div><div class="r" style="left:286.00px;top:138.00px;width:18.00px;height:1.20px;background:#2a2a2a;"></div><div class="r" style="left:0.00px;top:163.00px;width:472.00px;height:129.00px;background:#18191b;"></div><svg class="r" style="left:16px;top:176px" width="217" height="116" viewBox="0 0 217 116"><defs><linearGradient id="sky" x1="0" y1="0" x2="0" y2="1"><stop offset="0" stop-color="#8a86a4"/><stop offset="0.3" stop-color="#a89cae"/><stop offset="0.6" stop-color="#b8a4a0"/></linearGradient><linearGradient id="dune" x1="0" y1="0" x2="0.4" y2="1"><stop offset="0" stop-color="#c89058"/><stop offset="0.6" stop-color="#a06a40"/><stop offset="1" stop-color="#6a4230"/></linearGradient><linearGradient id="yel" x1="0" y1="0" x2="0" y2="1"><stop offset="0" stop-color="#d89838"/><stop offset="1" stop-color="#e8c060"/></linearGradient></defs><rect width="217" height="116" fill="url(#sky)"/><path d="M0 72 C25 62 55 46 78 43 L130 43 C160 50 190 62 217 72 L217 116 L0 116 Z" fill="url(#dune)"/><path d="M130 43 C160 50 190 62 217 72 L217 116 L85 116 C100 105 112 96 119 91 C132 82 142 72 140 62 C138 52 134 46 130 43 Z" fill="#3e2c24"/><rect x="3" y="14" width="28" height="22" fill="#000"/><rect x="35" y="13" width="39" height="29" fill="#2a2a2a"/><rect x="47" y="15" width="26" height="27" fill="#f8f8f8"/><rect x="36" y="18" width="2" height="20" fill="#a050a0" opacity="0.6"/><rect x="82" y="12" width="37" height="24" fill="#2a2a2a"/><rect x="91" y="14" width="8" height="1" fill="#3a8ee8"/><rect x="157" y="12" width="56" height="32" fill="#262626"/><rect x="3" y="49" width="39" height="29" fill="url(#yel)"/><rect x="9" y="53" width="22" height="4" fill="#f0e0c0" opacity="0.6"/><rect x="44" y="46" width="55" height="35" fill="#262626"/><rect x="47.0" y="53" width="7" height="8" fill="#c8c0b8"/><rect x="55.7" y="53" width="7" height="8" fill="#6a6050"/><rect x="64.4" y="53" width="7" height="8" fill="#d8c8a8"/><rect x="73.1" y="53" width="7" height="8" fill="#8a3030"/><rect x="81.8" y="53" width="7" height="8" fill="#4a70a8"/><rect x="90.5" y="53" width="7" height="8" fill="#c06050"/><rect x="47.0" y="66" width="7" height="8" fill="#4a90a0"/><rect x="55.7" y="66" width="7" height="8" fill="#c87858"/><rect x="64.4" y="66" width="7" height="8" fill="#3aa070"/><rect x="73.1" y="66" width="7" height="8" fill="#3aa070"/><rect x="81.8" y="66" width="7" height="8" fill="#d04050"/><rect x="152" y="47" width="62" height="35" fill="#2c2c2c"/><circle cx="185" cy="55" r="3.5" fill="#e0a030"/><rect x="190" y="54" width="20" height="4" fill="#4a80d0" opacity="0.8"/><rect x="168" y="63" width="6" height="2.5" fill="#e06040" opacity="0.8"/><rect x="168" y="70" width="6" height="2.5" fill="#4aa0e0" opacity="0.8"/><rect x="184" y="63" width="6" height="2.5" fill="#e06040" opacity="0.8"/><rect x="184" y="70" width="6" height="2.5" fill="#4aa0e0" opacity="0.8"/><rect x="200" y="63" width="6" height="2.5" fill="#e06040" opacity="0.8"/><rect x="200" y="70" width="6" height="2.5" fill="#4aa0e0" opacity="0.8"/><rect x="3" y="84" width="55" height="32" fill="#2a2a2a"/><rect x="4" y="86" width="38" height="30" fill="#f8f8f8"/><rect x="7" y="89" width="20" height="2.2" fill="#333"/><rect x="7" y="100" width="32" height="16" fill="#50a0e0"/><path d="M7 110 C15 104 25 106 39 108 L39 116 L7 116 Z" fill="#d87838"/><rect x="153" y="84" width="58" height="32" fill="#262626"/><rect x="161" y="89" width="4" height="3" fill="#4aa0e0" opacity="0.8"/><rect x="169" y="89" width="4" height="3" fill="#4aa0e0" opacity="0.8"/><rect x="177" y="89" width="4" height="3" fill="#4aa0e0" opacity="0.8"/><rect x="185" y="89" width="4" height="3" fill="#4aa0e0" opacity="0.8"/><rect x="193" y="89" width="4" height="3" fill="#4aa0e0" opacity="0.8"/><rect x="201" y="89" width="4" height="3" fill="#4aa0e0" opacity="0.8"/><rect x="103" y="2.5" width="11" height="2.5" fill="#ddd" opacity="0.7"/></svg><div class="t" style="left:240.00px;top:241.00px;font-size:8.5px;color:#e8e8e8;font-weight:700;transform:scaleX(1.0068);transform-origin:0 0;">Close windows straight from Mission Control</div><div class="t" style="left:240.00px;top:251.00px;font-size:4.2px;color:#b8b8b8;font-weight:400;transform:scaleX(1.3858);transform-origin:0 0;">Quickly close windows by clicking the x button.</div></div><div class="win" style="left:778px;top:688px;width:466px;height:292px;"><div class="r" style="left:0.00px;top:0.00px;width:466.00px;height:23.00px;background:#383836;"></div><div class="r" style="left:5.70px;top:5.80px;width:3.40px;height:3.40px;border-radius:50%;background:#ff5f57;"></div><div class="r" style="left:11.50px;top:5.80px;width:3.40px;height:3.40px;border-radius:50%;background:#febc2e;"></div><div class="r" style="left:17.20px;top:5.80px;width:3.40px;height:3.40px;border-radius:50%;background:#28c840;"></div><div class="r" style="left:28.00px;top:5.00px;width:6.00px;height:5.00px;background:transparent;border:0.8px solid #6a6a66;border-radius:1px"></div><div class="r" style="left:38.50px;top:7.20px;width:1.50px;height:0.70px;background:#6a6a66;"></div><div class="t" style="left:45.50px;top:7.30px;font-size:4.5px;color:#6a6a66;font-weight:400;">&#9650;</div><div class="r" style="left:56.50px;top:5.50px;width:4.50px;height:4.00px;background:transparent;border-top:0.8px solid #6a6a66;border-left:0.8px solid #6a6a66;border-radius:3px 3px 0 0"></div><div class="t" style="left:69.00px;top:7.30px;font-size:6.5px;color:#6a6a66;font-weight:400;">&#8249;</div><div class="t" style="left:79.50px;top:7.30px;font-size:6.5px;color:#555;font-weight:400;">&#8250;</div><div class="r" style="left:90.50px;top:5.00px;width:3.00px;height:5.00px;background:transparent;border:0.8px solid #6a6a66;border-top:none"></div><div class="r" style="left:141.00px;top:3.20px;width:177.00px;height:8.60px;background:#2c2c29;border:0.6px solid #363632;border-radius:2px"></div><div class="r" style="left:146.00px;top:5.50px;width:2.20px;height:3.60px;background:#cfcfcf;"></div><div class="t" style="left:83.00px;top:7.40px;width:300px;text-align:center;font-size:3.8px;color:#d8d8d8;font-weight:700;"># lorentsen.blog</div><div class="r" style="left:316.50px;top:6.10px;width:2.60px;height:2.60px;border-radius:50%;background:#3d8cf5;"></div><div class="r" style="left:322.70px;top:6.10px;width:2.60px;height:2.60px;border-radius:50%;background:#9a9a96;"></div><div class="r" style="left:332.50px;top:6.00px;width:1.30px;height:2.80px;background:#888;"></div><div class="r" style="left:335.00px;top:6.00px;width:1.30px;height:2.80px;background:#888;"></div><div class="r" style="left:342.50px;top:7.00px;width:5.00px;height:0.70px;background:#777;"></div><div class="r" style="left:344.60px;top:4.90px;width:0.70px;height:5.00px;background:#777;"></div><div class="r" style="left:445.50px;top:5.50px;width:5.00px;height:3.50px;background:transparent;border:0.8px solid #666;border-radius:2px"></div><div class="r" style="left:456.00px;top:5.00px;width:4.50px;height:4.50px;background:#1f6fe0;border-radius:1px"></div><div class="r" style="left:0.00px;top:15.00px;width:82.00px;height:8.00px;background:#1f1f1d;"></div><div class="r" style="left:3.50px;top:17.30px;width:3.20px;height:3.20px;background:#4aa0f0;border-radius:0.6px;opacity:0.85"></div><div class="r" style="left:14.00px;top:17.30px;width:3.20px;height:3.20px;background:#3a7ad0;border-radius:0.6px;opacity:0.85"></div><div class="r" style="left:24.00px;top:17.30px;width:3.20px;height:3.20px;background:#e0e0e0;border-radius:0.6px;opacity:0.85"></div><div class="r" style="left:34.40px;top:17.30px;width:3.20px;height:3.20px;background:#2a7ae0;border-radius:0.6px;opacity:0.85"></div><div class="r" style="left:44.70px;top:17.30px;width:3.20px;height:3.20px;background:#e8e8e0;border-radius:0.6px;opacity:0.85"></div><div class="r" style="left:55.10px;top:17.30px;width:3.20px;height:3.20px;background:#e03030;border-radius:0.6px;opacity:0.85"></div><div class="r" style="left:65.40px;top:17.30px;width:3.20px;height:3.20px;background:#aab4d0;border-radius:0.6px;opacity:0.85"></div><div class="r" style="left:75.80px;top:17.30px;width:3.20px;height:3.20px;background:#d08a30;border-radius:0.6px;opacity:0.85"></div><div class="r" style="left:20.70px;top:15.50px;width:0.60px;height:7.50px;background:#4a4a46;"></div><div class="r" style="left:51.60px;top:15.50px;width:0.60px;height:7.50px;background:#4a4a46;"></div><div class="r" style="left:82.70px;top:15.50px;width:0.60px;height:7.50px;background:#4a4a46;"></div><div class="r" style="left:184.50px;top:17.30px;width:3.20px;height:3.20px;background:#d8d8d0;"></div><div class="t" style="left:190.00px;top:19.00px;font-size:3.2px;color:#8e8e8a;font-weight:400;transform:scaleX(1.0777);transform-origin:0 0;">anders.lorentsen apple tips og tricks – Tips, tricks og tilbydelser om iPhone, iPad, Mac og hele Apple økosystemet</div><div class="r" style="left:0.00px;top:23.00px;width:466.00px;height:9.00px;background:#1d2026;"></div><div class="r" style="left:3.50px;top:25.20px;width:4.40px;height:4.40px;border-radius:50%;background:transparent;border:0.8px solid #e8e8e8"></div><div class="t" style="left:10.50px;top:27.60px;font-size:3.7px;color:#f0f0f0;font-weight:700;">Ultra-netværket</div><div class="r" style="left:43.60px;top:25.00px;width:5.20px;height:5.20px;background:#f0f0f0;"></div><div class="r" style="left:45.00px;top:26.30px;width:2.60px;height:2.60px;background:#1d2026;"></div><div class="t" style="left:52.00px;top:27.60px;font-size:3.7px;color:#f0f0f0;font-weight:700;">Læser</div><div class="r" style="left:421.00px;top:24.20px;width:17.00px;height:6.60px;background:#16181c;"></div><div class="r" style="left:423.80px;top:26.60px;width:3.00px;height:0.90px;background:#e8e8e8;transform:rotate(-45deg)"></div><div class="t" style="left:428.00px;top:27.60px;font-size:3.6px;color:#e8e8e8;font-weight:700;">Ret</div><div class="r" style="left:434.50px;top:27.00px;width:2.00px;height:1.20px;background:transparent;border-left:1px solid transparent;border-right:1px solid transparent;border-top:1.2px solid #e8e8e8;width:0;height:0"></div><div class="r" style="left:443.70px;top:25.20px;width:4.60px;height:4.60px;border-radius:50%;background:#b89a88;"></div><div class="r" style="left:455.80px;top:25.90px;width:3.20px;height:3.20px;background:#f0f0f0;transform:rotate(45deg);border-radius:0.5px"></div><div class="t" style="left:233.50px;top:27.50px;font-size:3px;color:#e8e8e8;font-weight:400;">&#9650;</div><div class="t" style="left:126.50px;top:50.21px;font-size:14.1px;color:#c4c1ba;font-weight:400;transform:scaleX(0.9799);transform-origin:0 0;">Tast emojis på din Mac uden at</div><div class="t" style="left:126.50px;top:67.71px;font-size:14.1px;color:#c4c1ba;font-weight:400;transform:scaleX(1.0348);transform-origin:0 0;">flytte fingrene fra tastaturet med</div><div class="t" style="left:126.50px;top:84.91px;font-size:14.1px;color:#c4c1ba;font-weight:400;transform:scaleX(0.9821);transform-origin:0 0;">den gratis app: Rocket</div><svg class="r" style="left:268.5px;top:77.5px" width="14" height="14" viewBox="0 0 14 14"><path d="M13 1 C10 1.5 7 3.5 5 6.5 L7.5 9 C10.5 7 12.5 4 13 1 Z" fill="#d8e0ec"/><path d="M13 1 C12 1.2 11.3 1.5 10.8 1.8 L12.2 3.2 C12.5 2.7 12.8 2 13 1 Z" fill="#4a90e0"/><circle cx="9.3" cy="4.7" r="1" fill="#2a2a40" stroke="#e06060" stroke-width="0.4"/><path d="M5 6.5 L2 6.8 L1 8.5 L4 8.2 Z" fill="#e83a20"/><path d="M7.5 9 L7.2 12 L5.5 13 L5.8 10 Z" fill="#e83a20"/><path d="M4.8 8.5 C3.5 9 2 10.5 1.2 12.8 C3.5 12 5 10.5 5.5 9.2 Z" fill="#f8c030"/></svg><div class="t" style="left:126.50px;top:102.50px;font-size:5.5px;color:#e0ddd6;font-weight:400;transform:scaleX(0.9683);transform-origin:0 0;">Emojis er vist kommet for at blive <span style="display:inline-block;position:relative;width:1.1em;height:0"><span style="position:absolute;left:0.05em;bottom:-0.12em;width:0.95em;height:0.95em;border-radius:50%;background:#f2c232"></span></span> Vi kan jo lige så godt se det i øjnene, at Emojis er</div><div class="t" style="left:126.50px;top:112.10px;font-size:5.5px;color:#e0ddd6;font-weight:400;transform:scaleX(1.0317);transform-origin:0 0;">blevet noget vi alle bruger, så hvorfor ikke gøre det lidt lettere og hurtigere på din</div><div class="t" style="left:126.50px;top:121.40px;font-size:5.5px;color:#e0ddd6;font-weight:400;transform:scaleX(1.0374);transform-origin:0 0;">Mac <span style="display:inline-block;position:relative;width:1.15em;height:0"><span style="position:absolute;left:0.05em;bottom:-0.05em;width:1em;height:0.75em;background:#4a5058;border-bottom:0.15em solid #b8b8b8"></span></span><span style="display:inline-block;position:relative;width:1.2em;height:0"><span style="position:absolute;left:0.05em;bottom:0.05em;width:1em;height:0.75em;background:#6a8ab8;border:0.1em solid #ccc"></span></span> Macen har længe haft en indbygget emoji-vælger, som du kan få adgang</div><div class="t" style="left:126.50px;top:130.80px;font-size:5.5px;color:#e0ddd6;font-weight:400;transform:scaleX(1.0222);transform-origin:0 0;">til ved at bruge…</div><div class="r" style="left:126.80px;top:142.00px;width:38.00px;height:8.00px;background:#0e2036;border-radius:1px"></div><div class="t" style="left:133.60px;top:146.00px;font-size:4.2px;color:#d0dae8;font-weight:400;transform:scaleX(1.1432);transform-origin:0 0;">Læs Videre</div><div class="t" style="left:126.80px;top:168.30px;font-size:3.7px;color:#d8d8d8;font-weight:700;">Del med andre</div><div class="r" style="left:126.90px;top:174.40px;width:9.20px;height:9.20px;border-radius:50%;background:#3a8fd0;"></div><div class="r" style="left:129.90px;top:177.40px;width:3.20px;height:3.20px;border-radius:50%;background:rgba(255,255,255,0.75);"></div><div class="r" style="left:138.60px;top:174.40px;width:9.20px;height:9.20px;border-radius:50%;background:#2a6aa8;"></div><div class="r" style="left:141.60px;top:177.40px;width:3.20px;height:3.20px;border-radius:50%;background:rgba(255,255,255,0.75);"></div><div class="r" style="left:150.00px;top:174.40px;width:9.20px;height:9.20px;border-radius:50%;background:#303134;"></div><div class="r" style="left:153.00px;top:177.40px;width:3.20px;height:3.20px;border-radius:50%;background:rgba(255,255,255,0.75);"></div><div class="r" style="left:161.40px;top:174.40px;width:9.20px;height:9.20px;border-radius:50%;background:#2556c8;"></div><div class="r" style="left:164.40px;top:177.40px;width:3.20px;height:3.20px;border-radius:50%;background:rgba(255,255,255,0.75);"></div><div class="r" style="left:172.90px;top:174.40px;width:9.20px;height:9.20px;border-radius:50%;background:#3018b0;"></div><div class="r" style="left:175.90px;top:177.40px;width:3.20px;height:3.20px;border-radius:50%;background:rgba(255,255,255,0.75);"></div><div class="r" style="left:184.40px;top:174.40px;width:9.20px;height:9.20px;border-radius:50%;background:#c0202a;"></div><div class="r" style="left:187.40px;top:177.40px;width:3.20px;height:3.20px;border-radius:50%;background:rgba(255,255,255,0.75);"></div><div class="t" style="left:126.80px;top:192.30px;font-size:3.4px;color:#3a9ae0;font-weight:400;transform:scaleX(1.0947);transform-origin:0 0;">Dansende sider</div><div class="r" style="left:127.00px;top:204.00px;width:21.00px;height:8.00px;background:transparent;border:0.5px solid #2c2e32;border-radius:1px"></div><div class="r" style="left:129.80px;top:206.40px;width:2.40px;height:3.00px;background:#d8d8d8;"></div><div class="t" style="left:134.00px;top:208.00px;font-size:3.4px;color:#c8c8c8;font-weight:400;">Reblog</div><div class="r" style="left:149.00px;top:204.00px;width:17.00px;height:8.00px;background:transparent;border:0.5px solid #2c2e32;border-radius:1px"></div><div class="r" style="left:151.40px;top:206.80px;width:2.40px;height:2.40px;border-radius:50%;background:transparent;border:0.5px solid #c8c8c8"></div><div class="t" style="left:156.00px;top:208.00px;font-size:3.4px;color:#c8c8c8;font-weight:400;">Like</div><div class="t" style="left:126.80px;top:216.90px;font-size:3.4px;color:#c0c0c0;font-weight:400;transform:scaleX(1.0612);transform-origin:0 0;">Vær den første til at synes om dette.</div><div class="r" style="left:127.00px;top:225.00px;width:3.00px;height:2.60px;background:#9a9a9a;"></div><div class="t" style="left:133.00px;top:226.50px;font-size:3.5px;color:#b8b8b8;font-weight:400;transform:scaleX(1.0450);transform-origin:0 0;">Efterlad en kommentar</div><div class="r" style="left:176.90px;top:224.90px;width:3.20px;height:3.20px;border-radius:50%;background:transparent;border:0.6px solid #aaa"></div><div class="t" style="left:182.00px;top:226.50px;font-size:3.5px;color:#3a9ae0;font-weight:400;transform:scaleX(1.1652);transform-origin:0 0;">8. august 2023</div><div class="r" style="left:216.50px;top:225.10px;width:2.80px;height:2.60px;background:transparent;border:0.6px solid #aaa"></div><div class="t" style="left:222.00px;top:226.50px;font-size:3.5px;color:#b8b8b8;font-weight:400;transform:scaleX(0.9756);transform-origin:0 0;">Udgivelse</div><div class="r" style="left:242.00px;top:226.10px;width:3.00px;height:0.80px;background:#aaa;transform:rotate(-45deg)"></div><div class="t" style="left:247.00px;top:226.50px;font-size:3.5px;color:#b8b8b8;font-weight:400;transform:scaleX(1.2229);transform-origin:0 0;">Redigér</div><div class="r" style="left:126.50px;top:243.70px;width:212.00px;height:0.40px;background:#2a2c30;"></div><div class="t" style="left:126.50px;top:262.81px;font-size:14.1px;color:#c4c1ba;font-weight:400;transform:scaleX(1.0153);transform-origin:0 0;">3 yderligere supernyttige</div><div class="t" style="left:126.50px;top:280.31px;font-size:14.1px;color:#c4c1ba;font-weight:400;transform:scaleX(0.9947);transform-origin:0 0;">tastaturgenveje på Mac du måske</div><div class="t" style="left:126.80px;top:288.20px;font-size:3.4px;color:#c8c8c8;font-weight:400;transform:scaleX(1.1422);transform-origin:0 0;">anders.lorentsen apple tips og tricks</div><div class="t" style="left:335.50px;top:288.20px;font-size:3.4px;color:#c8c8c8;font-weight:700;">Vf</div><div class="r" style="left:453.20px;top:262.70px;width:9.60px;height:9.60px;border-radius:50%;background:#3478b8;"></div><div class="t" style="left:455.40px;top:267.80px;font-size:4.6px;color:#eef;font-weight:700;">A</div><div class="r" style="left:438.00px;top:279.20px;width:24.00px;height:0.40px;background:#262a30;"></div><div class="r" style="left:440.50px;top:284.20px;width:4.20px;height:0.80px;background:#8a9098;transform:rotate(45deg)"></div><div class="r" style="left:440.50px;top:284.20px;width:4.20px;height:0.80px;background:#8a9098;transform:rotate(-45deg)"></div><div class="r" style="left:454.00px;top:283.70px;width:1.20px;height:1.20px;border-radius:50%;background:#a8aeb6;"></div><div class="r" style="left:456.50px;top:283.70px;width:1.20px;height:1.20px;border-radius:50%;background:#a8aeb6;"></div><div class="r" style="left:459.00px;top:283.70px;width:1.20px;height:1.20px;border-radius:50%;background:#a8aeb6;"></div></div><div class="dock"></div><svg class="r" style="left:468px;top:993px" width="714" height="52" viewBox="468 993 714 52"><defs><linearGradient id="dFinder" x1="0" y1="0" x2="0" y2="1"><stop offset="0" stop-color="#5ec0f8"/><stop offset="1" stop-color="#1a6ee8"/></linearGradient><linearGradient id="dGray" x1="0" y1="0" x2="0" y2="1"><stop offset="0" stop-color="#fafafa"/><stop offset="1" stop-color="#dcdcdc"/></linearGradient><linearGradient id="dSpark" x1="0" y1="0" x2="0" y2="1"><stop offset="0" stop-color="#4aa0f8"/><stop offset="1" stop-color="#1a64d8"/></linearGradient><linearGradient id="dMsg" x1="0" y1="0" x2="0" y2="1"><stop offset="0" stop-color="#7ee07a"/><stop offset="1" stop-color="#2cb83a"/></linearGradient><linearGradient id="dSet" x1="0" y1="0" x2="0" y2="1"><stop offset="0" stop-color="#c8c8cc"/><stop offset="1" stop-color="#7a7a80"/></linearGradient><linearGradient id="dWp" x1="0" y1="0" x2="0" y2="1"><stop offset="0" stop-color="#4a90dc"/><stop offset="1" stop-color="#2a6ac0"/></linearGradient><linearGradient id="dTrash" x1="0" y1="0" x2="1" y2="0"><stop offset="0" stop-color="#60646a"/><stop offset="0.5" stop-color="#72767c"/><stop offset="1" stop-color="#585c62"/></linearGradient></defs><rect x="476" y="1001" width="33" height="33" rx="7.5" fill="url(#dFinder)"/><path d="M493 1001 L501.5 1001 Q509 1001 509 1008.5 L509 1026.5 Q509 1034 501.5 1034 L495 1034 C493 1027 492 1021 490.5 1017 L495 1017 C494 1011 493.5 1006 493 1001 Z" fill="#e8eaee"/><rect x="484.5" y="1010" width="1.4" height="4" fill="#222"/><rect x="500" y="1010" width="1.4" height="4" fill="#222"/><path d="M482 1023 Q493 1030 503.5 1023" stroke="#222" stroke-width="1.3" fill="none"/><rect x="519" y="1001" width="33" height="33" rx="7.5" fill="url(#dGray)"/><circle cx="535.5" cy="1018" r="14.5" fill="#5cc870"/><circle cx="535.5" cy="1018" r="10" fill="none" stroke="#8ae09a" stroke-width="0.5"/><path d="M529 1003.5 L542 1003.5 L535.5 1018 Z" fill="#3a8ef0"/><circle cx="535.5" cy="1017.5" r="3.3" fill="#2a7ef0" stroke="#fff" stroke-width="1.4"/><rect x="562" y="1001" width="33" height="33" rx="7.5" fill="url(#dGray)"/><circle cx="578.5" cy="1017.5" r="14" fill="#2a7ae8"/><circle cx="578.5" cy="1017.5" r="12" fill="none" stroke="#e8f0ff" stroke-width="1.6" stroke-dasharray="0.6 1.6"/><path d="M589 1007 L577 1016 L580 1019 Z" fill="#f04040"/><path d="M568 1028 L577 1016 L580 1019 Z" fill="#f0f0f0"/><rect x="605" y="1001" width="33" height="33" rx="7.5" fill="url(#dSpark)"/><path d="M621.5 1005 L632.5 1027 L621.5 1022 L610.5 1027 Z" fill="#f0f4fa"/><path d="M621.5 1005 L621.5 1030 L619.5 1022 Z" fill="#c8d4e4"/><path d="M627 1034 Q635 1031 638 1025 L638 1028 Q638 1034 632 1034 Z" fill="#f0c030"/><rect x="648" y="1001" width="33" height="33" rx="7.5" fill="#f2eef8"/><path d="M663.5 1006 L663.5 1016.5 L653 1016.5 Q653 1007 663.5 1006 Z" fill="#d84ae8"/><path d="M663.5 1018.5 L663.5 1029 Q653 1028 653 1018.5 Z" fill="#3a3a88"/><path d="M665.5 1006 L675 1006 Q674 1015 665.5 1016.5 Z" fill="#2a5ad8"/><path d="M665.5 1018.5 Q674 1020 675 1029 L665.5 1029 Z" fill="#2a3a98"/><rect x="691" y="1001" width="33" height="33" rx="7.5" fill="url(#dMsg)"/><ellipse cx="707.5" cy="1016.5" rx="12" ry="9.5" fill="#f4f8f4"/><path d="M698 1021 L696 1028 L703 1024 Z" fill="#f4f8f4"/><rect x="734" y="1001" width="33" height="33" rx="7.5" fill="#fafafa"/><path d="M734 1010 L734 1008.5 Q734 1001 741.5 1001 L759.5 1001 Q767 1001 767 1008.5 L767 1010 Z" fill="#e83a3a"/><text x="750.5" y="1008.6" font-family="Liberation Sans" font-weight="700" font-size="6.5" fill="#fff" text-anchor="middle">AUG</text><text x="750.5" y="1030" font-family="Liberation Sans" font-size="19" fill="#222" text-anchor="middle">11</text><clipPath id="cMaps"><rect x="777" y="1001" width="33" height="33" rx="7.5"/></clipPath><g clip-path="url(#cMaps)"><rect x="777" y="1001" width="33" height="33" fill="#f0f0ee"/><path d="M795 1001 L810 1001 L810 1023 L800 1019 Z" fill="#6ad87a"/><path d="M777 1023 L784 1021 L784 1034 L777 1034 Z" fill="#e888c8"/><path d="M796 1027 L810 1027 L810 1034 L795 1034 Z" fill="#f8d040"/><path d="M777 1004 L787 1013 L777 1015 Z" fill="#7ad88a"/><rect x="791" y="1001" width="5" height="18" fill="#3a88f0"/><circle cx="805" cy="1006" r="7" fill="none" stroke="#c8c8cc" stroke-width="2.5"/><circle cx="793.5" cy="1022" r="6.8" fill="#2a78f0" stroke="#fff" stroke-width="1.4"/><path d="M793.5 1017.5 L797 1025.5 L793.5 1023.5 L790 1025.5 Z" fill="#fff"/></g><rect x="820" y="1001" width="33" height="33" rx="7.5" fill="#fafafa"/><ellipse cx="836.5" cy="1011" rx="4.3" ry="6.8" fill="#f4a030" opacity="0.85" transform="rotate(0 836.5 1017.5)"/><ellipse cx="836.5" cy="1011" rx="4.3" ry="6.8" fill="#f8d040" opacity="0.85" transform="rotate(45 836.5 1017.5)"/><ellipse cx="836.5" cy="1011" rx="4.3" ry="6.8" fill="#9ad050" opacity="0.85" transform="rotate(90 836.5 1017.5)"/><ellipse cx="836.5" cy="1011" rx="4.3" ry="6.8" fill="#50b878" opacity="0.85" transform="rotate(135 836.5 1017.5)"/><ellipse cx="836.5" cy="1011" rx="4.3" ry="6.8" fill="#40a8d8" opacity="0.85" transform="rotate(180 836.5 1017.5)"/><ellipse cx="836.5" cy="1011" rx="4.3" ry="6.8" fill="#6878d8" opacity="0.85" transform="rotate(225 836.5 1017.5)"/><ellipse cx="836.5" cy="1011" rx="4.3" ry="6.8" fill="#a060c8" opacity="0.85" transform="rotate(270 836.5 1017.5)"/><ellipse cx="836.5" cy="1011" rx="4.3" ry="6.8" fill="#e85060" opacity="0.85" transform="rotate(315 836.5 1017.5)"/><rect x="863" y="1001" width="33" height="33" rx="7.5" fill="#fafafa"/><circle cx="870" cy="1009.5" r="2.4" fill="#2a7af0"/><rect x="875.5" y="1009" width="16" height="0.8" fill="#d0d0d0"/><circle cx="870" cy="1017.5" r="2.4" fill="#f04040"/><rect x="875.5" y="1017" width="16" height="0.8" fill="#d0d0d0"/><circle cx="870" cy="1025.5" r="2.4" fill="#f89030"/><rect x="875.5" y="1025" width="16" height="0.8" fill="#d0d0d0"/><rect x="906" y="1001" width="33" height="33" rx="7.5" fill="#f6f4ee"/><path d="M906 1010 L906 1008.5 Q906 1001 913.5 1001 L931.5 1001 Q939 1001 939 1008.5 L939 1010 Z" fill="#f8c840"/><rect x="906" y="1016" width="33" height="0.5" fill="#dcdad0"/><rect x="906" y="1022" width="33" height="0.5" fill="#dcdad0"/><rect x="906" y="1028" width="33" height="0.5" fill="#dcdad0"/><rect x="949" y="1001" width="33" height="33" rx="7.5" fill="url(#dSet)"/><circle cx="965.5" cy="1017.5" r="13" fill="#3a3a3e"/><circle cx="965.5" cy="1017.5" r="11" fill="none" stroke="#9a9aa0" stroke-width="1.8" stroke-dasharray="1.6 1.2"/><circle cx="965.5" cy="1017.5" r="7.5" fill="none" stroke="#8a8a90" stroke-width="2"/><circle cx="965.5" cy="1017.5" r="2.2" fill="#8a8a90"/><path d="M965.5 1017.5 L965.5 1010 M965.5 1017.5 L959 1021 M965.5 1017.5 L972 1021" stroke="#8a8a90" stroke-width="1.5"/><rect x="992" y="1001" width="33" height="33" rx="7.5" fill="#f4f4f4"/><rect x="995" y="1004" width="27" height="27" rx="4" fill="#a8c0e8"/><rect x="995" y="1018" width="27" height="13" fill="#3a5a88"/><rect x="995" y="1023" width="27" height="8" fill="#e8eef4"/><rect x="1011" y="1016" width="13" height="16" rx="2" fill="#e8e8e8" stroke="#888" stroke-width="0.5"/><rect x="1011" y="1015" width="13" height="5" rx="2" fill="#111"/><rect x="1035" y="1001" width="33" height="33" rx="7.5" fill="#fafafa"/><rect x="1044" y="1006" width="19" height="23" rx="1.5" fill="#1e7a48"/><rect x="1053" y="1006" width="10" height="7.5" fill="#4ab878"/><rect x="1053" y="1013.5" width="10" height="7.5" fill="#2a9a5a"/><rect x="1039" y="1011" width="12" height="12" rx="1.5" fill="#16683a"/><text x="1045" y="1020.5" font-family="Liberation Sans" font-weight="700" font-size="8.5" fill="#fff" text-anchor="middle">X</text><rect x="1078" y="1001" width="33" height="33" rx="7.5" fill="url(#dWp)"/><circle cx="1094.5" cy="1017.5" r="11.5" fill="none" stroke="#fff" stroke-width="1.4"/><text x="1094.5" y="1023.5" font-family="Liberation Serif" font-weight="700" font-size="16" fill="#fff" text-anchor="middle">W</text><rect x="1126" y="1000" width="0.8" height="36" fill="#c8e070" opacity="0.8"/><path d="M1143 1002 L1172 1002 L1168 1034 Q1157.5 1036 1147 1034 Z" fill="url(#dTrash)"/><ellipse cx="1157.5" cy="1002.5" rx="14.5" ry="2.2" fill="#5a5e62" stroke="#8a8e92" stroke-width="0.6"/><circle cx="492.5" cy="1041" r="1.9" fill="#e4f098"/><circle cx="578.5" cy="1041" r="1.9" fill="#e4f098"/><circle cx="621.5" cy="1041" r="1.9" fill="#e4f098"/><circle cx="664.5" cy="1041" r="1.9" fill="#e4f098"/><circle cx="707.5" cy="1041" r="1.9" fill="#e4f098"/><circle cx="750.5" cy="1041" r="1.9" fill="#e4f098"/><circle cx="793.5" cy="1041" r="1.9" fill="#e4f098"/><circle cx="965.5" cy="1041" r="1.9" fill="#e4f098"/><circle cx="1008.5" cy="1041" r="1.9" fill="#e4f098"/><circle cx="1051.5" cy="1041" r="1.9" fill="#e4f098"/><circle cx="1094.5" cy="1041" r="1.9" fill="#e4f098"/></svg>
</body></html>
